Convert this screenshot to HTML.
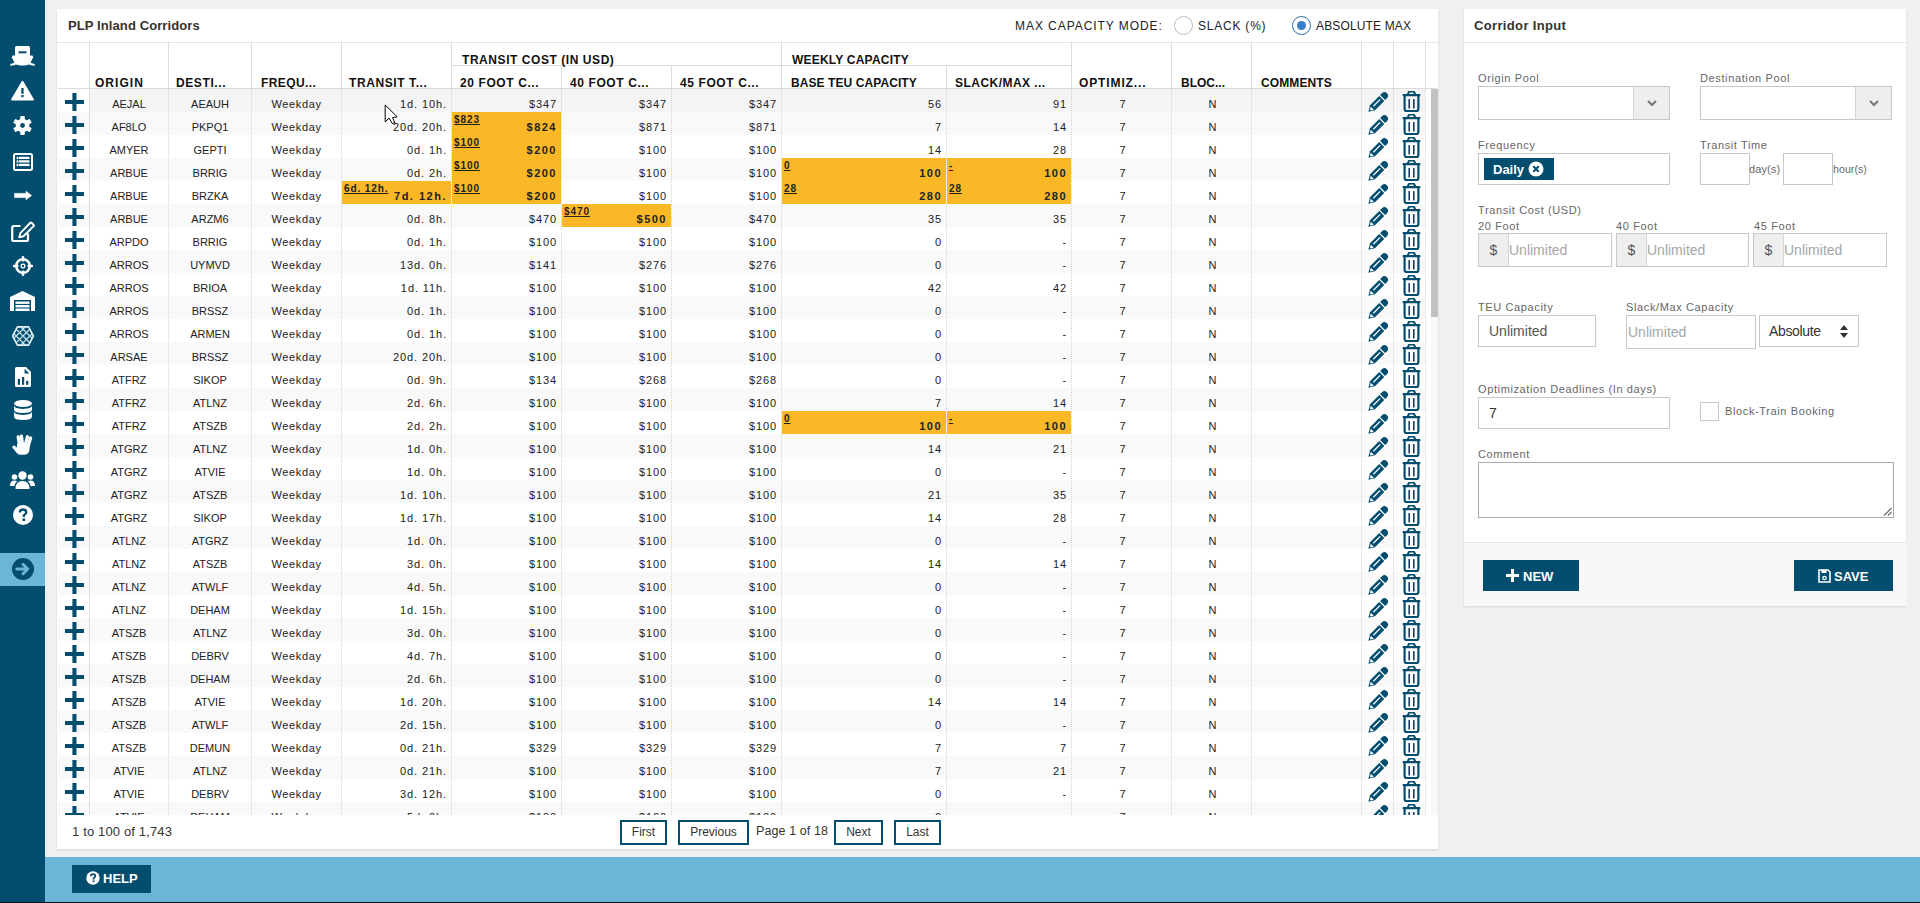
<!DOCTYPE html>
<html><head><meta charset="utf-8">
<style>
*{box-sizing:border-box;margin:0;padding:0}
html,body{width:1920px;height:903px;overflow:hidden}
body{background:#f0f0f0;font-family:"Liberation Sans",sans-serif;position:relative;color:#333}
.abs{position:absolute}
#sidebar{position:absolute;left:0;top:0;width:45px;height:903px;background:#034e6e}
#sidebar .hi{position:absolute;left:0;top:553px;width:45px;height:33px;background:#6bb6d7}
#sidebar svg{position:absolute}
#bottombar{position:absolute;left:45px;top:857px;width:1875px;height:46px;background:#6bb6d7}
#help{position:absolute;left:72px;top:865px;width:79px;height:28px;background:#034e6e;color:#fff;font-weight:bold;font-size:13px}
#panel{position:absolute;left:57px;top:9px;width:1381px;height:840px;background:#fff;box-shadow:0 1px 2px rgba(0,0,0,0.12)}
#title{position:absolute;left:11px;top:9px;font-size:13px;font-weight:bold;color:#333;letter-spacing:0.1px}
#hsep{position:absolute;left:0;top:33px;width:1381px;height:1px;background:#e6e6e6}
.mode{position:absolute;top:10px;font-size:12px;color:#222;white-space:nowrap}
.radio{position:absolute;top:7px;width:19px;height:19px;border-radius:50%;border:1px solid #bbb;background:#fff}
.radio.on{border-color:#2f6ea8}
.radio.on:after{content:"";position:absolute;left:4px;top:4px;width:9px;height:9px;border-radius:50%;background:#3a7dc9}
.hd{position:absolute;font-weight:bold;font-size:12px;color:#111;white-space:nowrap;letter-spacing:0.55px}
.vl{position:absolute;width:1px;background:#dcdcdc}
.hl-line{position:absolute;height:1px;background:#dcdcdc}
.row{position:absolute;left:1px;width:1367px;height:23px}
.c{position:absolute;top:0;height:23px;font-size:11px;color:#222;white-space:nowrap;line-height:31px;letter-spacing:0.45px}
.c.ctr{text-align:center}
.c.rt{text-align:right;padding-right:4px;letter-spacing:0.9px}
.c.cd{letter-spacing:0}
.c.one{letter-spacing:0;padding-left:2px}
.c.wk{letter-spacing:0.65px}
.c.or{background:#fbb826}
.c .sm{position:absolute;left:2px;top:2px;font-size:10px;font-weight:bold;text-decoration:underline;line-height:12px;letter-spacing:0.9px;color:#222}
.c .big{font-weight:bold;color:#222;letter-spacing:1.5px}
.dl{position:absolute;width:0;border-left:1px dotted #d3d3d3}
#foot-count{position:absolute;left:15px;top:815px;font-size:13px;color:#333;letter-spacing:0.15px}
.pbtn{position:absolute;top:811px;height:25px;border:2px solid #034e6e;background:#fff;font-size:12px;color:#333;text-align:center;line-height:21px}
#pagetxt{position:absolute;left:699px;top:815px;font-size:12.5px;color:#333;letter-spacing:0.1px}
#rpanel{position:absolute;left:1464px;top:9px;width:442px;height:597px;background:#fff;box-shadow:0 1px 2px rgba(0,0,0,0.12)}
#rtitle{position:absolute;left:10px;top:9px;font-size:13px;font-weight:bold;color:#333;letter-spacing:0.35px}
#rsep{position:absolute;left:0;top:33px;width:443px;height:1px;background:#e6e6e6}
.lbl{position:absolute;font-size:11px;color:#666;white-space:nowrap;letter-spacing:0.62px}
.inp{position:absolute;border:1px solid #c8c8c8;background:#fff}
.addon{position:absolute;left:0;top:0;bottom:0;width:30px;background:#eee;border-right:1px solid #d5d5d5;color:#555;font-size:14px;text-align:center}
.ph{position:absolute;font-size:14px;color:#a6a6a6;white-space:nowrap}
#rfoot{position:absolute;left:0;top:533px;width:443px;height:64px;background:#f8f8f8;border-top:1px solid #e6e6e6}
.btn{position:absolute;background:#034e6e;color:#fff;font-weight:bold;font-size:13px}
</style></head><body>

<div id="sidebar"><div class="hi"></div>
<svg style="left:10px;top:45px" width="25" height="22" viewBox="0 0 25 22"><g fill="#fff"><path d="M5 2.5 Q5 1 6.5 1 H18.5 Q20 1 20 2.5 V11.5 H5 Z"/><path d="M2.5 10.5 H22.5 L23.2 12.5 L20 18.5 Q18 20.5 12.5 20.5 Q7 20.5 5 18.5 L1.8 12.5 Z"/><path d="M0.3 19 Q3.5 18.8 5.5 16.5 L7 19 Q4.5 20.8 0.3 20.8 Z"/><path d="M24.7 19 Q21.5 18.8 19.5 16.5 L18 19 Q20.5 20.8 24.7 20.8 Z"/></g><rect x="8.5" y="6.3" width="8" height="2" fill="#034e6e"/></svg>
<svg style="left:11px;top:80px" width="23" height="21" viewBox="0 0 23 21"><path d="M11.5 2 L21.8 19.5 H1.2 Z" fill="#fff" stroke="#fff" stroke-linejoin="round" stroke-width="2.2"/><rect x="10.3" y="8" width="2.3" height="5.8" fill="#034e6e"/><rect x="10.3" y="15" width="2.3" height="2.2" fill="#034e6e"/></svg>
<svg style="left:13px;top:116px" width="19" height="19" viewBox="-9.5 -9.5 19 19"><g fill="#fff"><circle r="6.8"/><rect x="-2.3" y="-9.5" width="4.6" height="5" rx="1" transform="rotate(0)"/><rect x="-2.3" y="-9.5" width="4.6" height="5" rx="1" transform="rotate(60)"/><rect x="-2.3" y="-9.5" width="4.6" height="5" rx="1" transform="rotate(120)"/><rect x="-2.3" y="-9.5" width="4.6" height="5" rx="1" transform="rotate(180)"/><rect x="-2.3" y="-9.5" width="4.6" height="5" rx="1" transform="rotate(240)"/><rect x="-2.3" y="-9.5" width="4.6" height="5" rx="1" transform="rotate(300)"/></g><circle r="2.4" fill="#034e6e"/></svg>
<svg style="left:13px;top:153px" width="20" height="18" viewBox="0 0 20 18"><rect x="1" y="1" width="18" height="16" rx="1.5" fill="none" stroke="#fff" stroke-width="2"/><g fill="#fff"><rect x="3.6" y="3.8" width="1.8" height="2.3"/><rect x="6" y="3.8" width="10.5" height="2.3" rx="0.6"/><rect x="3.6" y="7.3" width="1.8" height="2.3"/><rect x="6" y="7.3" width="10.5" height="2.3" rx="0.6"/><rect x="3.6" y="10.8" width="1.8" height="2.3"/><rect x="6" y="10.8" width="10.5" height="2.3" rx="0.6"/></g></svg>
<svg style="left:14px;top:191px" width="18" height="9" viewBox="0 0 18 9"><path d="M0.5 2.4 H12 V0.3 L17.6 4.5 L12 8.7 V6.6 H0.5 Z" fill="#fff" stroke="#fff" stroke-width="0.6" stroke-linejoin="round"/></svg>
<svg style="left:10px;top:221px" width="25" height="22" viewBox="0 0 25 22"><path d="M10.5 5 H4 Q2.2 5 2.2 6.8 V18.2 Q2.2 20 4 20 H16.2 Q18 20 18 18.2 V12.5" fill="none" stroke="#fff" stroke-width="2.2"/><path d="M21.5 1.8 L23.6 3.9 Q24.2 4.5 23.6 5.1 L13.5 15.2 L9.3 16.3 L10.4 12.1 L20.3 1.8 Q20.9 1.2 21.5 1.8 Z" fill="none" stroke="#fff" stroke-width="2" stroke-linejoin="round"/></svg>
<svg style="left:13px;top:256px" width="20" height="20" viewBox="-10 -10 20 20"><circle r="6.8" fill="none" stroke="#fff" stroke-width="2.5"/><g fill="#fff"><rect x="-1.2" y="-10" width="2.4" height="5.5" rx="0.8"/><rect x="-1.2" y="4.5" width="2.4" height="5.5" rx="0.8"/><rect x="-10" y="-1.2" width="5.5" height="2.4" rx="0.8"/><rect x="4.5" y="-1.2" width="5.5" height="2.4" rx="0.8"/><rect x="-2.6" y="-0.6" width="1.4" height="1.2"/><rect x="1.2" y="-0.6" width="1.4" height="1.2"/><rect x="-0.6" y="-2.6" width="1.2" height="1.4"/><rect x="-0.6" y="1.2" width="1.2" height="1.4"/></g><rect x="-1.6" y="-1.6" width="3.2" height="3.2" fill="none" stroke="#fff" stroke-width="1"/></svg>
<svg style="left:10px;top:291px" width="25" height="20" viewBox="0 0 25 20"><path d="M0 6 L12.5 0 L25 6 V20 H21 V9 H4 V20 H0 Z" fill="#fff"/><g fill="#fff"><rect x="5.5" y="10.5" width="14" height="2.4"/><rect x="5.5" y="14" width="14" height="2.4"/><rect x="5.5" y="17.5" width="14" height="2.5"/></g></svg>
<svg style="left:12px;top:326px" width="22" height="20" viewBox="0 0 21 19"><defs><clipPath id="hx"><path d="M5.2 0.8h10.6l4.7 8.7-4.7 8.7H5.2L0.5 9.5z"/></clipPath></defs><g clip-path="url(#hx)"><path d="M-7.5 -2.0 L15.5 21.0 M-1.0 -2.0 L22.0 21.0 M5.5 -2.0 L28.5 21.0 M15.5 -2.0 L-7.5 21.0 M22.0 -2.0 L-1.0 21.0 M28.5 -2.0 L5.5 21.0" stroke="#c6dfea" stroke-width="1.2" fill="none"/></g><path d="M5.2 0.8h10.6l4.7 8.7-4.7 8.7H5.2L0.5 9.5z" fill="none" stroke="#e2f1f7" stroke-width="1.6" stroke-linejoin="round"/></svg>
<svg style="left:15px;top:367px" width="16" height="20" viewBox="0 0 16 20"><path d="M1.5 0 H11 L16 5 V18.5 Q16 20 14.5 20 H1.5 Q0 20 0 18.5 V1.5 Q0 0 1.5 0 Z" fill="#fff"/><path d="M9.6 1.8 L14.4 6.6 H9.6 Z" fill="#034e6e"/><g fill="#034e6e"><rect x="2.8" y="12" width="2.2" height="5.8"/><rect x="7" y="10" width="2.2" height="7.8"/><rect x="11.1" y="13.9" width="2.2" height="3.9"/></g></svg>
<svg style="left:14px;top:400px" width="18" height="20" viewBox="0 0 18 20"><g fill="#fff"><ellipse cx="9" cy="3.5" rx="9" ry="3.5"/><path d="M0 5.5q0 3 9 3.5q9-.5 9-3.5v4q0 3.5-9 3.5T0 9.5z"/><path d="M0 11.5q0 3 9 3.5q9-.5 9-3.5v5q0 3.5-9 3.5T0 16.5z"/></g></svg>
<svg style="left:12px;top:434px" width="22" height="22" viewBox="0 0 22 22"><g stroke="#fff" stroke-width="3.3" stroke-linecap="round" fill="none"><path d="M6.2 3 L7.6 11"/><path d="M9.4 2.2 L10.4 10"/><path d="M15.4 2.8 L13.6 10"/><path d="M18.6 4 L16.2 11.5"/><path d="M2 13.2 L5.5 16"/></g><path d="M5 9.5 H18.3 L17.2 17 Q16.2 20.8 12 20.8 H8.5 Q6 20.8 4.3 18.5 L1.8 15.2 L5 14.5 Z" fill="#fff"/></svg>
<svg style="left:10px;top:471px" width="25" height="18" viewBox="0 0 25 18"><g fill="#fff"><circle cx="12.5" cy="4.5" r="4.2"/><path d="M5.5 18 Q5.5 10 12.5 10 Q19.5 10 19.5 18z"/><circle cx="4.5" cy="6" r="2.8"/><circle cx="20.5" cy="6" r="2.8"/><path d="M0 15 Q0 9.5 4.5 9.5 Q6.5 9.5 7 10.5 Q4.5 12.5 4.5 15z"/><path d="M25 15 Q25 9.5 20.5 9.5 Q18.5 9.5 18 10.5 Q20.5 12.5 20.5 15z"/></g></svg>
<svg style="left:13px;top:505px" width="20" height="20" viewBox="0 0 20 20"><circle cx="10" cy="10" r="10" fill="#fff"/><path d="M6.8 7.5 Q7 4.5 10 4.5 Q13.2 4.5 13.2 7.3 Q13.2 9 11.2 10 Q10.8 10.4 10.8 12" fill="none" stroke="#034e6e" stroke-width="2.4"/><rect x="9.5" y="13.4" width="2.6" height="2.6" fill="#034e6e"/></svg>
<svg style="left:12px;top:558px" width="22" height="22" viewBox="0 0 22 22"><circle cx="11" cy="11" r="11" fill="#034e6e"/><path d="M4.8 11h10.4M11 6.3l4.7 4.7-4.7 4.7" stroke="#6bb6d7" stroke-width="3" fill="none" stroke-linecap="round" stroke-linejoin="round"/></svg>
</div>
<div id="panel">
<div id="title">PLP Inland Corridors</div><div id="hsep"></div>
<div class="mode" style="left:958px;letter-spacing:0.94px">MAX CAPACITY MODE:</div>
<div class="radio" style="left:1117px"></div>
<div class="mode" style="left:1141px;letter-spacing:0.78px">SLACK (%)</div>
<div class="radio on" style="left:1235px"></div>
<div class="mode" style="left:1259px;letter-spacing:0.15px">ABSOLUTE MAX</div>
<div class="hl-line" style="left:394px;top:56px;width:620px"></div>
<div class="hl-line" style="left:1px;top:79px;width:1379px"></div>
<div class="vl" style="left:32px;top:33px;height:46px"></div>
<div class="vl" style="left:111px;top:33px;height:46px"></div>
<div class="vl" style="left:194px;top:33px;height:46px"></div>
<div class="vl" style="left:284px;top:33px;height:46px"></div>
<div class="vl" style="left:394px;top:33px;height:46px"></div>
<div class="vl" style="left:504px;top:56px;height:23px"></div>
<div class="vl" style="left:614px;top:56px;height:23px"></div>
<div class="vl" style="left:724px;top:33px;height:46px"></div>
<div class="vl" style="left:889px;top:56px;height:23px"></div>
<div class="vl" style="left:1014px;top:33px;height:46px"></div>
<div class="vl" style="left:1114px;top:33px;height:46px"></div>
<div class="vl" style="left:1194px;top:33px;height:46px"></div>
<div class="vl" style="left:1304px;top:33px;height:46px"></div>
<div class="vl" style="left:1336px;top:33px;height:46px"></div>
<div class="vl" style="left:1368px;top:33px;height:46px"></div>
<div class="hd" style="left:38px;top:67px;letter-spacing:1.03px">ORIGIN</div>
<div class="hd" style="left:119px;top:67px;letter-spacing:0.60px">DESTI...</div>
<div class="hd" style="left:204px;top:67px;letter-spacing:0.40px">FREQU...</div>
<div class="hd" style="left:292px;top:67px;letter-spacing:0.59px">TRANSIT T...</div>
<div class="hd" style="left:403px;top:67px;letter-spacing:0.60px">20 FOOT C...</div>
<div class="hd" style="left:513px;top:67px;letter-spacing:0.60px">40 FOOT C...</div>
<div class="hd" style="left:623px;top:67px;letter-spacing:0.60px">45 FOOT C...</div>
<div class="hd" style="left:734px;top:67px;letter-spacing:0.08px">BASE TEU CAPACITY</div>
<div class="hd" style="left:898px;top:67px;letter-spacing:0.46px">SLACK/MAX ...</div>
<div class="hd" style="left:1022px;top:67px;letter-spacing:0.88px">OPTIMIZ...</div>
<div class="hd" style="left:1124px;top:67px;letter-spacing:0.00px">BLOC...</div>
<div class="hd" style="left:1204px;top:67px;letter-spacing:0.11px">COMMENTS</div>
<div class="hd" style="left:405px;top:44px;letter-spacing:0.56px">TRANSIT COST (IN USD)</div>
<div class="hd" style="left:735px;top:44px;letter-spacing:0.21px">WEEKLY CAPACITY</div>
<div class="abs" style="left:0;top:80px;width:1381px;height:726px;overflow:hidden">
<div class="abs" style="left:1px;top:0px;width:1367px;height:23px;background:#fff"></div>
<div class="abs" style="left:32px;top:0;width:1336px;height:23px;background:#f4f4f4"></div>
<div class="c ctr cd" style="left:33px;top:0px;width:78px">AEJAL</div>
<div class="c ctr cd" style="left:112px;top:0px;width:82px">AEAUH</div>
<div class="c ctr wk" style="left:195px;top:0px;width:89px">Weekday</div>
<div class="c rt" style="left:285px;top:0px;width:109px">1d. 10h.</div>
<div class="c rt" style="left:395px;top:0px;width:109px">$347</div>
<div class="c rt" style="left:505px;top:0px;width:109px">$347</div>
<div class="c rt" style="left:615px;top:0px;width:109px">$347</div>
<div class="c rt" style="left:725px;top:0px;width:164px">56</div>
<div class="c rt" style="left:890px;top:0px;width:124px">91</div>
<div class="c ctr one" style="left:1015px;top:0px;width:99px">7</div>
<div class="c ctr one" style="left:1115px;top:0px;width:79px">N</div>
<div class="c ctr" style="left:1195px;top:0px;width:109px"></div>
<div class="abs" style="left:8px;top:4px;line-height:0"><svg width="19" height="18" viewBox="0 0 19 18"><path d="M7.4 0h4.1v7h7.5v3.9h-7.5V18H7.4v-7.1H0V7h7.4z" fill="#034e6e"/></svg></div>
<div class="abs" style="left:1311px;top:3px;line-height:0"><svg width="21" height="21" viewBox="0 0 21 21" style="overflow:visible"><g transform="translate(0.6,19.6) rotate(-45)"><path d="M0 0 L5.5 -3.5 H18.6 V3.5 H5.5 Z" fill="#034e6e"/><path d="M19.8 -3.5 H22.4 A3.5 3.5 0 0 1 22.4 3.5 H19.8 Z" fill="#034e6e"/><rect x="7.2" y="-1.1" width="9.6" height="1.3" fill="#fff"/><path d="M1.7 0.2 L5 -2 V2.4 Z" fill="#fff"/><path d="M0 0 L2 -1.2 V1.2 Z" fill="#034e6e"/></g></svg></div>
<div class="abs" style="left:1345px;top:2px;line-height:0"><svg width="19" height="21" viewBox="0 0 19 21"><path d="M5.8 3.2 L6.8 1.2 Q7.2 0.6 8 0.6 H11 Q11.8 0.6 12.2 1.2 L13.2 3.2" stroke="#034e6e" stroke-width="2" fill="none" stroke-linejoin="round"/><rect x="0.6" y="3" width="17.8" height="2.3" rx="0.8" fill="#034e6e"/><path d="M2.6 4.5 V17.8 Q2.6 20.1 4.6 20.1 H14.4 Q16.4 20.1 16.4 17.8 V4.5" stroke="#034e6e" stroke-width="2.2" fill="none"/><rect x="6.4" y="8" width="1.6" height="9.5" rx="0.5" fill="#1d3b5e"/><rect x="11" y="8" width="1.6" height="9.5" rx="0.5" fill="#1d3b5e"/></svg></div>
<div class="abs" style="left:1px;top:23px;width:1367px;height:23px;background:#f9f9f9"></div>
<div class="c ctr cd" style="left:33px;top:23px;width:78px">AF8LO</div>
<div class="c ctr cd" style="left:112px;top:23px;width:82px">PKPQ1</div>
<div class="c ctr wk" style="left:195px;top:23px;width:89px">Weekday</div>
<div class="c rt" style="left:285px;top:23px;width:109px">20d. 20h.</div>
<div class="c rt or" style="left:395px;top:23px;width:109px"><span class="sm">$823</span><span class="big">$824</span></div>
<div class="c rt" style="left:505px;top:23px;width:109px">$871</div>
<div class="c rt" style="left:615px;top:23px;width:109px">$871</div>
<div class="c rt" style="left:725px;top:23px;width:164px">7</div>
<div class="c rt" style="left:890px;top:23px;width:124px">14</div>
<div class="c ctr one" style="left:1015px;top:23px;width:99px">7</div>
<div class="c ctr one" style="left:1115px;top:23px;width:79px">N</div>
<div class="c ctr" style="left:1195px;top:23px;width:109px"></div>
<div class="abs" style="left:8px;top:27px;line-height:0"><svg width="19" height="18" viewBox="0 0 19 18"><path d="M7.4 0h4.1v7h7.5v3.9h-7.5V18H7.4v-7.1H0V7h7.4z" fill="#034e6e"/></svg></div>
<div class="abs" style="left:1311px;top:26px;line-height:0"><svg width="21" height="21" viewBox="0 0 21 21" style="overflow:visible"><g transform="translate(0.6,19.6) rotate(-45)"><path d="M0 0 L5.5 -3.5 H18.6 V3.5 H5.5 Z" fill="#034e6e"/><path d="M19.8 -3.5 H22.4 A3.5 3.5 0 0 1 22.4 3.5 H19.8 Z" fill="#034e6e"/><rect x="7.2" y="-1.1" width="9.6" height="1.3" fill="#fff"/><path d="M1.7 0.2 L5 -2 V2.4 Z" fill="#fff"/><path d="M0 0 L2 -1.2 V1.2 Z" fill="#034e6e"/></g></svg></div>
<div class="abs" style="left:1345px;top:25px;line-height:0"><svg width="19" height="21" viewBox="0 0 19 21"><path d="M5.8 3.2 L6.8 1.2 Q7.2 0.6 8 0.6 H11 Q11.8 0.6 12.2 1.2 L13.2 3.2" stroke="#034e6e" stroke-width="2" fill="none" stroke-linejoin="round"/><rect x="0.6" y="3" width="17.8" height="2.3" rx="0.8" fill="#034e6e"/><path d="M2.6 4.5 V17.8 Q2.6 20.1 4.6 20.1 H14.4 Q16.4 20.1 16.4 17.8 V4.5" stroke="#034e6e" stroke-width="2.2" fill="none"/><rect x="6.4" y="8" width="1.6" height="9.5" rx="0.5" fill="#1d3b5e"/><rect x="11" y="8" width="1.6" height="9.5" rx="0.5" fill="#1d3b5e"/></svg></div>
<div class="abs" style="left:1px;top:46px;width:1367px;height:23px;background:#fff"></div>
<div class="c ctr cd" style="left:33px;top:46px;width:78px">AMYER</div>
<div class="c ctr cd" style="left:112px;top:46px;width:82px">GEPTI</div>
<div class="c ctr wk" style="left:195px;top:46px;width:89px">Weekday</div>
<div class="c rt" style="left:285px;top:46px;width:109px">0d. 1h.</div>
<div class="c rt or" style="left:395px;top:46px;width:109px"><span class="sm">$100</span><span class="big">$200</span></div>
<div class="c rt" style="left:505px;top:46px;width:109px">$100</div>
<div class="c rt" style="left:615px;top:46px;width:109px">$100</div>
<div class="c rt" style="left:725px;top:46px;width:164px">14</div>
<div class="c rt" style="left:890px;top:46px;width:124px">28</div>
<div class="c ctr one" style="left:1015px;top:46px;width:99px">7</div>
<div class="c ctr one" style="left:1115px;top:46px;width:79px">N</div>
<div class="c ctr" style="left:1195px;top:46px;width:109px"></div>
<div class="abs" style="left:8px;top:50px;line-height:0"><svg width="19" height="18" viewBox="0 0 19 18"><path d="M7.4 0h4.1v7h7.5v3.9h-7.5V18H7.4v-7.1H0V7h7.4z" fill="#034e6e"/></svg></div>
<div class="abs" style="left:1311px;top:49px;line-height:0"><svg width="21" height="21" viewBox="0 0 21 21" style="overflow:visible"><g transform="translate(0.6,19.6) rotate(-45)"><path d="M0 0 L5.5 -3.5 H18.6 V3.5 H5.5 Z" fill="#034e6e"/><path d="M19.8 -3.5 H22.4 A3.5 3.5 0 0 1 22.4 3.5 H19.8 Z" fill="#034e6e"/><rect x="7.2" y="-1.1" width="9.6" height="1.3" fill="#fff"/><path d="M1.7 0.2 L5 -2 V2.4 Z" fill="#fff"/><path d="M0 0 L2 -1.2 V1.2 Z" fill="#034e6e"/></g></svg></div>
<div class="abs" style="left:1345px;top:48px;line-height:0"><svg width="19" height="21" viewBox="0 0 19 21"><path d="M5.8 3.2 L6.8 1.2 Q7.2 0.6 8 0.6 H11 Q11.8 0.6 12.2 1.2 L13.2 3.2" stroke="#034e6e" stroke-width="2" fill="none" stroke-linejoin="round"/><rect x="0.6" y="3" width="17.8" height="2.3" rx="0.8" fill="#034e6e"/><path d="M2.6 4.5 V17.8 Q2.6 20.1 4.6 20.1 H14.4 Q16.4 20.1 16.4 17.8 V4.5" stroke="#034e6e" stroke-width="2.2" fill="none"/><rect x="6.4" y="8" width="1.6" height="9.5" rx="0.5" fill="#1d3b5e"/><rect x="11" y="8" width="1.6" height="9.5" rx="0.5" fill="#1d3b5e"/></svg></div>
<div class="abs" style="left:1px;top:69px;width:1367px;height:23px;background:#f9f9f9"></div>
<div class="c ctr cd" style="left:33px;top:69px;width:78px">ARBUE</div>
<div class="c ctr cd" style="left:112px;top:69px;width:82px">BRRIG</div>
<div class="c ctr wk" style="left:195px;top:69px;width:89px">Weekday</div>
<div class="c rt" style="left:285px;top:69px;width:109px">0d. 2h.</div>
<div class="c rt or" style="left:395px;top:69px;width:109px"><span class="sm">$100</span><span class="big">$200</span></div>
<div class="c rt" style="left:505px;top:69px;width:109px">$100</div>
<div class="c rt" style="left:615px;top:69px;width:109px">$100</div>
<div class="c rt or" style="left:725px;top:69px;width:164px"><span class="sm">0</span><span class="big">100</span></div>
<div class="c rt or" style="left:890px;top:69px;width:124px"><span class="sm">-</span><span class="big">100</span></div>
<div class="c ctr one" style="left:1015px;top:69px;width:99px">7</div>
<div class="c ctr one" style="left:1115px;top:69px;width:79px">N</div>
<div class="c ctr" style="left:1195px;top:69px;width:109px"></div>
<div class="abs" style="left:8px;top:73px;line-height:0"><svg width="19" height="18" viewBox="0 0 19 18"><path d="M7.4 0h4.1v7h7.5v3.9h-7.5V18H7.4v-7.1H0V7h7.4z" fill="#034e6e"/></svg></div>
<div class="abs" style="left:1311px;top:72px;line-height:0"><svg width="21" height="21" viewBox="0 0 21 21" style="overflow:visible"><g transform="translate(0.6,19.6) rotate(-45)"><path d="M0 0 L5.5 -3.5 H18.6 V3.5 H5.5 Z" fill="#034e6e"/><path d="M19.8 -3.5 H22.4 A3.5 3.5 0 0 1 22.4 3.5 H19.8 Z" fill="#034e6e"/><rect x="7.2" y="-1.1" width="9.6" height="1.3" fill="#fff"/><path d="M1.7 0.2 L5 -2 V2.4 Z" fill="#fff"/><path d="M0 0 L2 -1.2 V1.2 Z" fill="#034e6e"/></g></svg></div>
<div class="abs" style="left:1345px;top:71px;line-height:0"><svg width="19" height="21" viewBox="0 0 19 21"><path d="M5.8 3.2 L6.8 1.2 Q7.2 0.6 8 0.6 H11 Q11.8 0.6 12.2 1.2 L13.2 3.2" stroke="#034e6e" stroke-width="2" fill="none" stroke-linejoin="round"/><rect x="0.6" y="3" width="17.8" height="2.3" rx="0.8" fill="#034e6e"/><path d="M2.6 4.5 V17.8 Q2.6 20.1 4.6 20.1 H14.4 Q16.4 20.1 16.4 17.8 V4.5" stroke="#034e6e" stroke-width="2.2" fill="none"/><rect x="6.4" y="8" width="1.6" height="9.5" rx="0.5" fill="#1d3b5e"/><rect x="11" y="8" width="1.6" height="9.5" rx="0.5" fill="#1d3b5e"/></svg></div>
<div class="abs" style="left:1px;top:92px;width:1367px;height:23px;background:#fff"></div>
<div class="c ctr cd" style="left:33px;top:92px;width:78px">ARBUE</div>
<div class="c ctr cd" style="left:112px;top:92px;width:82px">BRZKA</div>
<div class="c ctr wk" style="left:195px;top:92px;width:89px">Weekday</div>
<div class="c rt or" style="left:285px;top:92px;width:109px"><span class="sm">6d. 12h.</span><span class="big">7d. 12h.</span></div>
<div class="c rt or" style="left:395px;top:92px;width:109px"><span class="sm">$100</span><span class="big">$200</span></div>
<div class="c rt" style="left:505px;top:92px;width:109px">$100</div>
<div class="c rt" style="left:615px;top:92px;width:109px">$100</div>
<div class="c rt or" style="left:725px;top:92px;width:164px"><span class="sm">28</span><span class="big">280</span></div>
<div class="c rt or" style="left:890px;top:92px;width:124px"><span class="sm">28</span><span class="big">280</span></div>
<div class="c ctr one" style="left:1015px;top:92px;width:99px">7</div>
<div class="c ctr one" style="left:1115px;top:92px;width:79px">N</div>
<div class="c ctr" style="left:1195px;top:92px;width:109px"></div>
<div class="abs" style="left:8px;top:96px;line-height:0"><svg width="19" height="18" viewBox="0 0 19 18"><path d="M7.4 0h4.1v7h7.5v3.9h-7.5V18H7.4v-7.1H0V7h7.4z" fill="#034e6e"/></svg></div>
<div class="abs" style="left:1311px;top:95px;line-height:0"><svg width="21" height="21" viewBox="0 0 21 21" style="overflow:visible"><g transform="translate(0.6,19.6) rotate(-45)"><path d="M0 0 L5.5 -3.5 H18.6 V3.5 H5.5 Z" fill="#034e6e"/><path d="M19.8 -3.5 H22.4 A3.5 3.5 0 0 1 22.4 3.5 H19.8 Z" fill="#034e6e"/><rect x="7.2" y="-1.1" width="9.6" height="1.3" fill="#fff"/><path d="M1.7 0.2 L5 -2 V2.4 Z" fill="#fff"/><path d="M0 0 L2 -1.2 V1.2 Z" fill="#034e6e"/></g></svg></div>
<div class="abs" style="left:1345px;top:94px;line-height:0"><svg width="19" height="21" viewBox="0 0 19 21"><path d="M5.8 3.2 L6.8 1.2 Q7.2 0.6 8 0.6 H11 Q11.8 0.6 12.2 1.2 L13.2 3.2" stroke="#034e6e" stroke-width="2" fill="none" stroke-linejoin="round"/><rect x="0.6" y="3" width="17.8" height="2.3" rx="0.8" fill="#034e6e"/><path d="M2.6 4.5 V17.8 Q2.6 20.1 4.6 20.1 H14.4 Q16.4 20.1 16.4 17.8 V4.5" stroke="#034e6e" stroke-width="2.2" fill="none"/><rect x="6.4" y="8" width="1.6" height="9.5" rx="0.5" fill="#1d3b5e"/><rect x="11" y="8" width="1.6" height="9.5" rx="0.5" fill="#1d3b5e"/></svg></div>
<div class="abs" style="left:1px;top:115px;width:1367px;height:23px;background:#f9f9f9"></div>
<div class="c ctr cd" style="left:33px;top:115px;width:78px">ARBUE</div>
<div class="c ctr cd" style="left:112px;top:115px;width:82px">ARZM6</div>
<div class="c ctr wk" style="left:195px;top:115px;width:89px">Weekday</div>
<div class="c rt" style="left:285px;top:115px;width:109px">0d. 8h.</div>
<div class="c rt" style="left:395px;top:115px;width:109px">$470</div>
<div class="c rt or" style="left:505px;top:115px;width:109px"><span class="sm">$470</span><span class="big">$500</span></div>
<div class="c rt" style="left:615px;top:115px;width:109px">$470</div>
<div class="c rt" style="left:725px;top:115px;width:164px">35</div>
<div class="c rt" style="left:890px;top:115px;width:124px">35</div>
<div class="c ctr one" style="left:1015px;top:115px;width:99px">7</div>
<div class="c ctr one" style="left:1115px;top:115px;width:79px">N</div>
<div class="c ctr" style="left:1195px;top:115px;width:109px"></div>
<div class="abs" style="left:8px;top:119px;line-height:0"><svg width="19" height="18" viewBox="0 0 19 18"><path d="M7.4 0h4.1v7h7.5v3.9h-7.5V18H7.4v-7.1H0V7h7.4z" fill="#034e6e"/></svg></div>
<div class="abs" style="left:1311px;top:118px;line-height:0"><svg width="21" height="21" viewBox="0 0 21 21" style="overflow:visible"><g transform="translate(0.6,19.6) rotate(-45)"><path d="M0 0 L5.5 -3.5 H18.6 V3.5 H5.5 Z" fill="#034e6e"/><path d="M19.8 -3.5 H22.4 A3.5 3.5 0 0 1 22.4 3.5 H19.8 Z" fill="#034e6e"/><rect x="7.2" y="-1.1" width="9.6" height="1.3" fill="#fff"/><path d="M1.7 0.2 L5 -2 V2.4 Z" fill="#fff"/><path d="M0 0 L2 -1.2 V1.2 Z" fill="#034e6e"/></g></svg></div>
<div class="abs" style="left:1345px;top:117px;line-height:0"><svg width="19" height="21" viewBox="0 0 19 21"><path d="M5.8 3.2 L6.8 1.2 Q7.2 0.6 8 0.6 H11 Q11.8 0.6 12.2 1.2 L13.2 3.2" stroke="#034e6e" stroke-width="2" fill="none" stroke-linejoin="round"/><rect x="0.6" y="3" width="17.8" height="2.3" rx="0.8" fill="#034e6e"/><path d="M2.6 4.5 V17.8 Q2.6 20.1 4.6 20.1 H14.4 Q16.4 20.1 16.4 17.8 V4.5" stroke="#034e6e" stroke-width="2.2" fill="none"/><rect x="6.4" y="8" width="1.6" height="9.5" rx="0.5" fill="#1d3b5e"/><rect x="11" y="8" width="1.6" height="9.5" rx="0.5" fill="#1d3b5e"/></svg></div>
<div class="abs" style="left:1px;top:138px;width:1367px;height:23px;background:#fff"></div>
<div class="c ctr cd" style="left:33px;top:138px;width:78px">ARPDO</div>
<div class="c ctr cd" style="left:112px;top:138px;width:82px">BRRIG</div>
<div class="c ctr wk" style="left:195px;top:138px;width:89px">Weekday</div>
<div class="c rt" style="left:285px;top:138px;width:109px">0d. 1h.</div>
<div class="c rt" style="left:395px;top:138px;width:109px">$100</div>
<div class="c rt" style="left:505px;top:138px;width:109px">$100</div>
<div class="c rt" style="left:615px;top:138px;width:109px">$100</div>
<div class="c rt" style="left:725px;top:138px;width:164px">0</div>
<div class="c rt" style="left:890px;top:138px;width:124px">-</div>
<div class="c ctr one" style="left:1015px;top:138px;width:99px">7</div>
<div class="c ctr one" style="left:1115px;top:138px;width:79px">N</div>
<div class="c ctr" style="left:1195px;top:138px;width:109px"></div>
<div class="abs" style="left:8px;top:142px;line-height:0"><svg width="19" height="18" viewBox="0 0 19 18"><path d="M7.4 0h4.1v7h7.5v3.9h-7.5V18H7.4v-7.1H0V7h7.4z" fill="#034e6e"/></svg></div>
<div class="abs" style="left:1311px;top:141px;line-height:0"><svg width="21" height="21" viewBox="0 0 21 21" style="overflow:visible"><g transform="translate(0.6,19.6) rotate(-45)"><path d="M0 0 L5.5 -3.5 H18.6 V3.5 H5.5 Z" fill="#034e6e"/><path d="M19.8 -3.5 H22.4 A3.5 3.5 0 0 1 22.4 3.5 H19.8 Z" fill="#034e6e"/><rect x="7.2" y="-1.1" width="9.6" height="1.3" fill="#fff"/><path d="M1.7 0.2 L5 -2 V2.4 Z" fill="#fff"/><path d="M0 0 L2 -1.2 V1.2 Z" fill="#034e6e"/></g></svg></div>
<div class="abs" style="left:1345px;top:140px;line-height:0"><svg width="19" height="21" viewBox="0 0 19 21"><path d="M5.8 3.2 L6.8 1.2 Q7.2 0.6 8 0.6 H11 Q11.8 0.6 12.2 1.2 L13.2 3.2" stroke="#034e6e" stroke-width="2" fill="none" stroke-linejoin="round"/><rect x="0.6" y="3" width="17.8" height="2.3" rx="0.8" fill="#034e6e"/><path d="M2.6 4.5 V17.8 Q2.6 20.1 4.6 20.1 H14.4 Q16.4 20.1 16.4 17.8 V4.5" stroke="#034e6e" stroke-width="2.2" fill="none"/><rect x="6.4" y="8" width="1.6" height="9.5" rx="0.5" fill="#1d3b5e"/><rect x="11" y="8" width="1.6" height="9.5" rx="0.5" fill="#1d3b5e"/></svg></div>
<div class="abs" style="left:1px;top:161px;width:1367px;height:23px;background:#f9f9f9"></div>
<div class="c ctr cd" style="left:33px;top:161px;width:78px">ARROS</div>
<div class="c ctr cd" style="left:112px;top:161px;width:82px">UYMVD</div>
<div class="c ctr wk" style="left:195px;top:161px;width:89px">Weekday</div>
<div class="c rt" style="left:285px;top:161px;width:109px">13d. 0h.</div>
<div class="c rt" style="left:395px;top:161px;width:109px">$141</div>
<div class="c rt" style="left:505px;top:161px;width:109px">$276</div>
<div class="c rt" style="left:615px;top:161px;width:109px">$276</div>
<div class="c rt" style="left:725px;top:161px;width:164px">0</div>
<div class="c rt" style="left:890px;top:161px;width:124px">-</div>
<div class="c ctr one" style="left:1015px;top:161px;width:99px">7</div>
<div class="c ctr one" style="left:1115px;top:161px;width:79px">N</div>
<div class="c ctr" style="left:1195px;top:161px;width:109px"></div>
<div class="abs" style="left:8px;top:165px;line-height:0"><svg width="19" height="18" viewBox="0 0 19 18"><path d="M7.4 0h4.1v7h7.5v3.9h-7.5V18H7.4v-7.1H0V7h7.4z" fill="#034e6e"/></svg></div>
<div class="abs" style="left:1311px;top:164px;line-height:0"><svg width="21" height="21" viewBox="0 0 21 21" style="overflow:visible"><g transform="translate(0.6,19.6) rotate(-45)"><path d="M0 0 L5.5 -3.5 H18.6 V3.5 H5.5 Z" fill="#034e6e"/><path d="M19.8 -3.5 H22.4 A3.5 3.5 0 0 1 22.4 3.5 H19.8 Z" fill="#034e6e"/><rect x="7.2" y="-1.1" width="9.6" height="1.3" fill="#fff"/><path d="M1.7 0.2 L5 -2 V2.4 Z" fill="#fff"/><path d="M0 0 L2 -1.2 V1.2 Z" fill="#034e6e"/></g></svg></div>
<div class="abs" style="left:1345px;top:163px;line-height:0"><svg width="19" height="21" viewBox="0 0 19 21"><path d="M5.8 3.2 L6.8 1.2 Q7.2 0.6 8 0.6 H11 Q11.8 0.6 12.2 1.2 L13.2 3.2" stroke="#034e6e" stroke-width="2" fill="none" stroke-linejoin="round"/><rect x="0.6" y="3" width="17.8" height="2.3" rx="0.8" fill="#034e6e"/><path d="M2.6 4.5 V17.8 Q2.6 20.1 4.6 20.1 H14.4 Q16.4 20.1 16.4 17.8 V4.5" stroke="#034e6e" stroke-width="2.2" fill="none"/><rect x="6.4" y="8" width="1.6" height="9.5" rx="0.5" fill="#1d3b5e"/><rect x="11" y="8" width="1.6" height="9.5" rx="0.5" fill="#1d3b5e"/></svg></div>
<div class="abs" style="left:1px;top:184px;width:1367px;height:23px;background:#fff"></div>
<div class="c ctr cd" style="left:33px;top:184px;width:78px">ARROS</div>
<div class="c ctr cd" style="left:112px;top:184px;width:82px">BRIOA</div>
<div class="c ctr wk" style="left:195px;top:184px;width:89px">Weekday</div>
<div class="c rt" style="left:285px;top:184px;width:109px">1d. 11h.</div>
<div class="c rt" style="left:395px;top:184px;width:109px">$100</div>
<div class="c rt" style="left:505px;top:184px;width:109px">$100</div>
<div class="c rt" style="left:615px;top:184px;width:109px">$100</div>
<div class="c rt" style="left:725px;top:184px;width:164px">42</div>
<div class="c rt" style="left:890px;top:184px;width:124px">42</div>
<div class="c ctr one" style="left:1015px;top:184px;width:99px">7</div>
<div class="c ctr one" style="left:1115px;top:184px;width:79px">N</div>
<div class="c ctr" style="left:1195px;top:184px;width:109px"></div>
<div class="abs" style="left:8px;top:188px;line-height:0"><svg width="19" height="18" viewBox="0 0 19 18"><path d="M7.4 0h4.1v7h7.5v3.9h-7.5V18H7.4v-7.1H0V7h7.4z" fill="#034e6e"/></svg></div>
<div class="abs" style="left:1311px;top:187px;line-height:0"><svg width="21" height="21" viewBox="0 0 21 21" style="overflow:visible"><g transform="translate(0.6,19.6) rotate(-45)"><path d="M0 0 L5.5 -3.5 H18.6 V3.5 H5.5 Z" fill="#034e6e"/><path d="M19.8 -3.5 H22.4 A3.5 3.5 0 0 1 22.4 3.5 H19.8 Z" fill="#034e6e"/><rect x="7.2" y="-1.1" width="9.6" height="1.3" fill="#fff"/><path d="M1.7 0.2 L5 -2 V2.4 Z" fill="#fff"/><path d="M0 0 L2 -1.2 V1.2 Z" fill="#034e6e"/></g></svg></div>
<div class="abs" style="left:1345px;top:186px;line-height:0"><svg width="19" height="21" viewBox="0 0 19 21"><path d="M5.8 3.2 L6.8 1.2 Q7.2 0.6 8 0.6 H11 Q11.8 0.6 12.2 1.2 L13.2 3.2" stroke="#034e6e" stroke-width="2" fill="none" stroke-linejoin="round"/><rect x="0.6" y="3" width="17.8" height="2.3" rx="0.8" fill="#034e6e"/><path d="M2.6 4.5 V17.8 Q2.6 20.1 4.6 20.1 H14.4 Q16.4 20.1 16.4 17.8 V4.5" stroke="#034e6e" stroke-width="2.2" fill="none"/><rect x="6.4" y="8" width="1.6" height="9.5" rx="0.5" fill="#1d3b5e"/><rect x="11" y="8" width="1.6" height="9.5" rx="0.5" fill="#1d3b5e"/></svg></div>
<div class="abs" style="left:1px;top:207px;width:1367px;height:23px;background:#f9f9f9"></div>
<div class="c ctr cd" style="left:33px;top:207px;width:78px">ARROS</div>
<div class="c ctr cd" style="left:112px;top:207px;width:82px">BRSSZ</div>
<div class="c ctr wk" style="left:195px;top:207px;width:89px">Weekday</div>
<div class="c rt" style="left:285px;top:207px;width:109px">0d. 1h.</div>
<div class="c rt" style="left:395px;top:207px;width:109px">$100</div>
<div class="c rt" style="left:505px;top:207px;width:109px">$100</div>
<div class="c rt" style="left:615px;top:207px;width:109px">$100</div>
<div class="c rt" style="left:725px;top:207px;width:164px">0</div>
<div class="c rt" style="left:890px;top:207px;width:124px">-</div>
<div class="c ctr one" style="left:1015px;top:207px;width:99px">7</div>
<div class="c ctr one" style="left:1115px;top:207px;width:79px">N</div>
<div class="c ctr" style="left:1195px;top:207px;width:109px"></div>
<div class="abs" style="left:8px;top:211px;line-height:0"><svg width="19" height="18" viewBox="0 0 19 18"><path d="M7.4 0h4.1v7h7.5v3.9h-7.5V18H7.4v-7.1H0V7h7.4z" fill="#034e6e"/></svg></div>
<div class="abs" style="left:1311px;top:210px;line-height:0"><svg width="21" height="21" viewBox="0 0 21 21" style="overflow:visible"><g transform="translate(0.6,19.6) rotate(-45)"><path d="M0 0 L5.5 -3.5 H18.6 V3.5 H5.5 Z" fill="#034e6e"/><path d="M19.8 -3.5 H22.4 A3.5 3.5 0 0 1 22.4 3.5 H19.8 Z" fill="#034e6e"/><rect x="7.2" y="-1.1" width="9.6" height="1.3" fill="#fff"/><path d="M1.7 0.2 L5 -2 V2.4 Z" fill="#fff"/><path d="M0 0 L2 -1.2 V1.2 Z" fill="#034e6e"/></g></svg></div>
<div class="abs" style="left:1345px;top:209px;line-height:0"><svg width="19" height="21" viewBox="0 0 19 21"><path d="M5.8 3.2 L6.8 1.2 Q7.2 0.6 8 0.6 H11 Q11.8 0.6 12.2 1.2 L13.2 3.2" stroke="#034e6e" stroke-width="2" fill="none" stroke-linejoin="round"/><rect x="0.6" y="3" width="17.8" height="2.3" rx="0.8" fill="#034e6e"/><path d="M2.6 4.5 V17.8 Q2.6 20.1 4.6 20.1 H14.4 Q16.4 20.1 16.4 17.8 V4.5" stroke="#034e6e" stroke-width="2.2" fill="none"/><rect x="6.4" y="8" width="1.6" height="9.5" rx="0.5" fill="#1d3b5e"/><rect x="11" y="8" width="1.6" height="9.5" rx="0.5" fill="#1d3b5e"/></svg></div>
<div class="abs" style="left:1px;top:230px;width:1367px;height:23px;background:#fff"></div>
<div class="c ctr cd" style="left:33px;top:230px;width:78px">ARROS</div>
<div class="c ctr cd" style="left:112px;top:230px;width:82px">ARMEN</div>
<div class="c ctr wk" style="left:195px;top:230px;width:89px">Weekday</div>
<div class="c rt" style="left:285px;top:230px;width:109px">0d. 1h.</div>
<div class="c rt" style="left:395px;top:230px;width:109px">$100</div>
<div class="c rt" style="left:505px;top:230px;width:109px">$100</div>
<div class="c rt" style="left:615px;top:230px;width:109px">$100</div>
<div class="c rt" style="left:725px;top:230px;width:164px">0</div>
<div class="c rt" style="left:890px;top:230px;width:124px">-</div>
<div class="c ctr one" style="left:1015px;top:230px;width:99px">7</div>
<div class="c ctr one" style="left:1115px;top:230px;width:79px">N</div>
<div class="c ctr" style="left:1195px;top:230px;width:109px"></div>
<div class="abs" style="left:8px;top:234px;line-height:0"><svg width="19" height="18" viewBox="0 0 19 18"><path d="M7.4 0h4.1v7h7.5v3.9h-7.5V18H7.4v-7.1H0V7h7.4z" fill="#034e6e"/></svg></div>
<div class="abs" style="left:1311px;top:233px;line-height:0"><svg width="21" height="21" viewBox="0 0 21 21" style="overflow:visible"><g transform="translate(0.6,19.6) rotate(-45)"><path d="M0 0 L5.5 -3.5 H18.6 V3.5 H5.5 Z" fill="#034e6e"/><path d="M19.8 -3.5 H22.4 A3.5 3.5 0 0 1 22.4 3.5 H19.8 Z" fill="#034e6e"/><rect x="7.2" y="-1.1" width="9.6" height="1.3" fill="#fff"/><path d="M1.7 0.2 L5 -2 V2.4 Z" fill="#fff"/><path d="M0 0 L2 -1.2 V1.2 Z" fill="#034e6e"/></g></svg></div>
<div class="abs" style="left:1345px;top:232px;line-height:0"><svg width="19" height="21" viewBox="0 0 19 21"><path d="M5.8 3.2 L6.8 1.2 Q7.2 0.6 8 0.6 H11 Q11.8 0.6 12.2 1.2 L13.2 3.2" stroke="#034e6e" stroke-width="2" fill="none" stroke-linejoin="round"/><rect x="0.6" y="3" width="17.8" height="2.3" rx="0.8" fill="#034e6e"/><path d="M2.6 4.5 V17.8 Q2.6 20.1 4.6 20.1 H14.4 Q16.4 20.1 16.4 17.8 V4.5" stroke="#034e6e" stroke-width="2.2" fill="none"/><rect x="6.4" y="8" width="1.6" height="9.5" rx="0.5" fill="#1d3b5e"/><rect x="11" y="8" width="1.6" height="9.5" rx="0.5" fill="#1d3b5e"/></svg></div>
<div class="abs" style="left:1px;top:253px;width:1367px;height:23px;background:#f9f9f9"></div>
<div class="c ctr cd" style="left:33px;top:253px;width:78px">ARSAE</div>
<div class="c ctr cd" style="left:112px;top:253px;width:82px">BRSSZ</div>
<div class="c ctr wk" style="left:195px;top:253px;width:89px">Weekday</div>
<div class="c rt" style="left:285px;top:253px;width:109px">20d. 20h.</div>
<div class="c rt" style="left:395px;top:253px;width:109px">$100</div>
<div class="c rt" style="left:505px;top:253px;width:109px">$100</div>
<div class="c rt" style="left:615px;top:253px;width:109px">$100</div>
<div class="c rt" style="left:725px;top:253px;width:164px">0</div>
<div class="c rt" style="left:890px;top:253px;width:124px">-</div>
<div class="c ctr one" style="left:1015px;top:253px;width:99px">7</div>
<div class="c ctr one" style="left:1115px;top:253px;width:79px">N</div>
<div class="c ctr" style="left:1195px;top:253px;width:109px"></div>
<div class="abs" style="left:8px;top:257px;line-height:0"><svg width="19" height="18" viewBox="0 0 19 18"><path d="M7.4 0h4.1v7h7.5v3.9h-7.5V18H7.4v-7.1H0V7h7.4z" fill="#034e6e"/></svg></div>
<div class="abs" style="left:1311px;top:256px;line-height:0"><svg width="21" height="21" viewBox="0 0 21 21" style="overflow:visible"><g transform="translate(0.6,19.6) rotate(-45)"><path d="M0 0 L5.5 -3.5 H18.6 V3.5 H5.5 Z" fill="#034e6e"/><path d="M19.8 -3.5 H22.4 A3.5 3.5 0 0 1 22.4 3.5 H19.8 Z" fill="#034e6e"/><rect x="7.2" y="-1.1" width="9.6" height="1.3" fill="#fff"/><path d="M1.7 0.2 L5 -2 V2.4 Z" fill="#fff"/><path d="M0 0 L2 -1.2 V1.2 Z" fill="#034e6e"/></g></svg></div>
<div class="abs" style="left:1345px;top:255px;line-height:0"><svg width="19" height="21" viewBox="0 0 19 21"><path d="M5.8 3.2 L6.8 1.2 Q7.2 0.6 8 0.6 H11 Q11.8 0.6 12.2 1.2 L13.2 3.2" stroke="#034e6e" stroke-width="2" fill="none" stroke-linejoin="round"/><rect x="0.6" y="3" width="17.8" height="2.3" rx="0.8" fill="#034e6e"/><path d="M2.6 4.5 V17.8 Q2.6 20.1 4.6 20.1 H14.4 Q16.4 20.1 16.4 17.8 V4.5" stroke="#034e6e" stroke-width="2.2" fill="none"/><rect x="6.4" y="8" width="1.6" height="9.5" rx="0.5" fill="#1d3b5e"/><rect x="11" y="8" width="1.6" height="9.5" rx="0.5" fill="#1d3b5e"/></svg></div>
<div class="abs" style="left:1px;top:276px;width:1367px;height:23px;background:#fff"></div>
<div class="c ctr cd" style="left:33px;top:276px;width:78px">ATFRZ</div>
<div class="c ctr cd" style="left:112px;top:276px;width:82px">SIKOP</div>
<div class="c ctr wk" style="left:195px;top:276px;width:89px">Weekday</div>
<div class="c rt" style="left:285px;top:276px;width:109px">0d. 9h.</div>
<div class="c rt" style="left:395px;top:276px;width:109px">$134</div>
<div class="c rt" style="left:505px;top:276px;width:109px">$268</div>
<div class="c rt" style="left:615px;top:276px;width:109px">$268</div>
<div class="c rt" style="left:725px;top:276px;width:164px">0</div>
<div class="c rt" style="left:890px;top:276px;width:124px">-</div>
<div class="c ctr one" style="left:1015px;top:276px;width:99px">7</div>
<div class="c ctr one" style="left:1115px;top:276px;width:79px">N</div>
<div class="c ctr" style="left:1195px;top:276px;width:109px"></div>
<div class="abs" style="left:8px;top:280px;line-height:0"><svg width="19" height="18" viewBox="0 0 19 18"><path d="M7.4 0h4.1v7h7.5v3.9h-7.5V18H7.4v-7.1H0V7h7.4z" fill="#034e6e"/></svg></div>
<div class="abs" style="left:1311px;top:279px;line-height:0"><svg width="21" height="21" viewBox="0 0 21 21" style="overflow:visible"><g transform="translate(0.6,19.6) rotate(-45)"><path d="M0 0 L5.5 -3.5 H18.6 V3.5 H5.5 Z" fill="#034e6e"/><path d="M19.8 -3.5 H22.4 A3.5 3.5 0 0 1 22.4 3.5 H19.8 Z" fill="#034e6e"/><rect x="7.2" y="-1.1" width="9.6" height="1.3" fill="#fff"/><path d="M1.7 0.2 L5 -2 V2.4 Z" fill="#fff"/><path d="M0 0 L2 -1.2 V1.2 Z" fill="#034e6e"/></g></svg></div>
<div class="abs" style="left:1345px;top:278px;line-height:0"><svg width="19" height="21" viewBox="0 0 19 21"><path d="M5.8 3.2 L6.8 1.2 Q7.2 0.6 8 0.6 H11 Q11.8 0.6 12.2 1.2 L13.2 3.2" stroke="#034e6e" stroke-width="2" fill="none" stroke-linejoin="round"/><rect x="0.6" y="3" width="17.8" height="2.3" rx="0.8" fill="#034e6e"/><path d="M2.6 4.5 V17.8 Q2.6 20.1 4.6 20.1 H14.4 Q16.4 20.1 16.4 17.8 V4.5" stroke="#034e6e" stroke-width="2.2" fill="none"/><rect x="6.4" y="8" width="1.6" height="9.5" rx="0.5" fill="#1d3b5e"/><rect x="11" y="8" width="1.6" height="9.5" rx="0.5" fill="#1d3b5e"/></svg></div>
<div class="abs" style="left:1px;top:299px;width:1367px;height:23px;background:#f9f9f9"></div>
<div class="c ctr cd" style="left:33px;top:299px;width:78px">ATFRZ</div>
<div class="c ctr cd" style="left:112px;top:299px;width:82px">ATLNZ</div>
<div class="c ctr wk" style="left:195px;top:299px;width:89px">Weekday</div>
<div class="c rt" style="left:285px;top:299px;width:109px">2d. 6h.</div>
<div class="c rt" style="left:395px;top:299px;width:109px">$100</div>
<div class="c rt" style="left:505px;top:299px;width:109px">$100</div>
<div class="c rt" style="left:615px;top:299px;width:109px">$100</div>
<div class="c rt" style="left:725px;top:299px;width:164px">7</div>
<div class="c rt" style="left:890px;top:299px;width:124px">14</div>
<div class="c ctr one" style="left:1015px;top:299px;width:99px">7</div>
<div class="c ctr one" style="left:1115px;top:299px;width:79px">N</div>
<div class="c ctr" style="left:1195px;top:299px;width:109px"></div>
<div class="abs" style="left:8px;top:303px;line-height:0"><svg width="19" height="18" viewBox="0 0 19 18"><path d="M7.4 0h4.1v7h7.5v3.9h-7.5V18H7.4v-7.1H0V7h7.4z" fill="#034e6e"/></svg></div>
<div class="abs" style="left:1311px;top:302px;line-height:0"><svg width="21" height="21" viewBox="0 0 21 21" style="overflow:visible"><g transform="translate(0.6,19.6) rotate(-45)"><path d="M0 0 L5.5 -3.5 H18.6 V3.5 H5.5 Z" fill="#034e6e"/><path d="M19.8 -3.5 H22.4 A3.5 3.5 0 0 1 22.4 3.5 H19.8 Z" fill="#034e6e"/><rect x="7.2" y="-1.1" width="9.6" height="1.3" fill="#fff"/><path d="M1.7 0.2 L5 -2 V2.4 Z" fill="#fff"/><path d="M0 0 L2 -1.2 V1.2 Z" fill="#034e6e"/></g></svg></div>
<div class="abs" style="left:1345px;top:301px;line-height:0"><svg width="19" height="21" viewBox="0 0 19 21"><path d="M5.8 3.2 L6.8 1.2 Q7.2 0.6 8 0.6 H11 Q11.8 0.6 12.2 1.2 L13.2 3.2" stroke="#034e6e" stroke-width="2" fill="none" stroke-linejoin="round"/><rect x="0.6" y="3" width="17.8" height="2.3" rx="0.8" fill="#034e6e"/><path d="M2.6 4.5 V17.8 Q2.6 20.1 4.6 20.1 H14.4 Q16.4 20.1 16.4 17.8 V4.5" stroke="#034e6e" stroke-width="2.2" fill="none"/><rect x="6.4" y="8" width="1.6" height="9.5" rx="0.5" fill="#1d3b5e"/><rect x="11" y="8" width="1.6" height="9.5" rx="0.5" fill="#1d3b5e"/></svg></div>
<div class="abs" style="left:1px;top:322px;width:1367px;height:23px;background:#fff"></div>
<div class="c ctr cd" style="left:33px;top:322px;width:78px">ATFRZ</div>
<div class="c ctr cd" style="left:112px;top:322px;width:82px">ATSZB</div>
<div class="c ctr wk" style="left:195px;top:322px;width:89px">Weekday</div>
<div class="c rt" style="left:285px;top:322px;width:109px">2d. 2h.</div>
<div class="c rt" style="left:395px;top:322px;width:109px">$100</div>
<div class="c rt" style="left:505px;top:322px;width:109px">$100</div>
<div class="c rt" style="left:615px;top:322px;width:109px">$100</div>
<div class="c rt or" style="left:725px;top:322px;width:164px"><span class="sm">0</span><span class="big">100</span></div>
<div class="c rt or" style="left:890px;top:322px;width:124px"><span class="sm">-</span><span class="big">100</span></div>
<div class="c ctr one" style="left:1015px;top:322px;width:99px">7</div>
<div class="c ctr one" style="left:1115px;top:322px;width:79px">N</div>
<div class="c ctr" style="left:1195px;top:322px;width:109px"></div>
<div class="abs" style="left:8px;top:326px;line-height:0"><svg width="19" height="18" viewBox="0 0 19 18"><path d="M7.4 0h4.1v7h7.5v3.9h-7.5V18H7.4v-7.1H0V7h7.4z" fill="#034e6e"/></svg></div>
<div class="abs" style="left:1311px;top:325px;line-height:0"><svg width="21" height="21" viewBox="0 0 21 21" style="overflow:visible"><g transform="translate(0.6,19.6) rotate(-45)"><path d="M0 0 L5.5 -3.5 H18.6 V3.5 H5.5 Z" fill="#034e6e"/><path d="M19.8 -3.5 H22.4 A3.5 3.5 0 0 1 22.4 3.5 H19.8 Z" fill="#034e6e"/><rect x="7.2" y="-1.1" width="9.6" height="1.3" fill="#fff"/><path d="M1.7 0.2 L5 -2 V2.4 Z" fill="#fff"/><path d="M0 0 L2 -1.2 V1.2 Z" fill="#034e6e"/></g></svg></div>
<div class="abs" style="left:1345px;top:324px;line-height:0"><svg width="19" height="21" viewBox="0 0 19 21"><path d="M5.8 3.2 L6.8 1.2 Q7.2 0.6 8 0.6 H11 Q11.8 0.6 12.2 1.2 L13.2 3.2" stroke="#034e6e" stroke-width="2" fill="none" stroke-linejoin="round"/><rect x="0.6" y="3" width="17.8" height="2.3" rx="0.8" fill="#034e6e"/><path d="M2.6 4.5 V17.8 Q2.6 20.1 4.6 20.1 H14.4 Q16.4 20.1 16.4 17.8 V4.5" stroke="#034e6e" stroke-width="2.2" fill="none"/><rect x="6.4" y="8" width="1.6" height="9.5" rx="0.5" fill="#1d3b5e"/><rect x="11" y="8" width="1.6" height="9.5" rx="0.5" fill="#1d3b5e"/></svg></div>
<div class="abs" style="left:1px;top:345px;width:1367px;height:23px;background:#f9f9f9"></div>
<div class="c ctr cd" style="left:33px;top:345px;width:78px">ATGRZ</div>
<div class="c ctr cd" style="left:112px;top:345px;width:82px">ATLNZ</div>
<div class="c ctr wk" style="left:195px;top:345px;width:89px">Weekday</div>
<div class="c rt" style="left:285px;top:345px;width:109px">1d. 0h.</div>
<div class="c rt" style="left:395px;top:345px;width:109px">$100</div>
<div class="c rt" style="left:505px;top:345px;width:109px">$100</div>
<div class="c rt" style="left:615px;top:345px;width:109px">$100</div>
<div class="c rt" style="left:725px;top:345px;width:164px">14</div>
<div class="c rt" style="left:890px;top:345px;width:124px">21</div>
<div class="c ctr one" style="left:1015px;top:345px;width:99px">7</div>
<div class="c ctr one" style="left:1115px;top:345px;width:79px">N</div>
<div class="c ctr" style="left:1195px;top:345px;width:109px"></div>
<div class="abs" style="left:8px;top:349px;line-height:0"><svg width="19" height="18" viewBox="0 0 19 18"><path d="M7.4 0h4.1v7h7.5v3.9h-7.5V18H7.4v-7.1H0V7h7.4z" fill="#034e6e"/></svg></div>
<div class="abs" style="left:1311px;top:348px;line-height:0"><svg width="21" height="21" viewBox="0 0 21 21" style="overflow:visible"><g transform="translate(0.6,19.6) rotate(-45)"><path d="M0 0 L5.5 -3.5 H18.6 V3.5 H5.5 Z" fill="#034e6e"/><path d="M19.8 -3.5 H22.4 A3.5 3.5 0 0 1 22.4 3.5 H19.8 Z" fill="#034e6e"/><rect x="7.2" y="-1.1" width="9.6" height="1.3" fill="#fff"/><path d="M1.7 0.2 L5 -2 V2.4 Z" fill="#fff"/><path d="M0 0 L2 -1.2 V1.2 Z" fill="#034e6e"/></g></svg></div>
<div class="abs" style="left:1345px;top:347px;line-height:0"><svg width="19" height="21" viewBox="0 0 19 21"><path d="M5.8 3.2 L6.8 1.2 Q7.2 0.6 8 0.6 H11 Q11.8 0.6 12.2 1.2 L13.2 3.2" stroke="#034e6e" stroke-width="2" fill="none" stroke-linejoin="round"/><rect x="0.6" y="3" width="17.8" height="2.3" rx="0.8" fill="#034e6e"/><path d="M2.6 4.5 V17.8 Q2.6 20.1 4.6 20.1 H14.4 Q16.4 20.1 16.4 17.8 V4.5" stroke="#034e6e" stroke-width="2.2" fill="none"/><rect x="6.4" y="8" width="1.6" height="9.5" rx="0.5" fill="#1d3b5e"/><rect x="11" y="8" width="1.6" height="9.5" rx="0.5" fill="#1d3b5e"/></svg></div>
<div class="abs" style="left:1px;top:368px;width:1367px;height:23px;background:#fff"></div>
<div class="c ctr cd" style="left:33px;top:368px;width:78px">ATGRZ</div>
<div class="c ctr cd" style="left:112px;top:368px;width:82px">ATVIE</div>
<div class="c ctr wk" style="left:195px;top:368px;width:89px">Weekday</div>
<div class="c rt" style="left:285px;top:368px;width:109px">1d. 0h.</div>
<div class="c rt" style="left:395px;top:368px;width:109px">$100</div>
<div class="c rt" style="left:505px;top:368px;width:109px">$100</div>
<div class="c rt" style="left:615px;top:368px;width:109px">$100</div>
<div class="c rt" style="left:725px;top:368px;width:164px">0</div>
<div class="c rt" style="left:890px;top:368px;width:124px">-</div>
<div class="c ctr one" style="left:1015px;top:368px;width:99px">7</div>
<div class="c ctr one" style="left:1115px;top:368px;width:79px">N</div>
<div class="c ctr" style="left:1195px;top:368px;width:109px"></div>
<div class="abs" style="left:8px;top:372px;line-height:0"><svg width="19" height="18" viewBox="0 0 19 18"><path d="M7.4 0h4.1v7h7.5v3.9h-7.5V18H7.4v-7.1H0V7h7.4z" fill="#034e6e"/></svg></div>
<div class="abs" style="left:1311px;top:371px;line-height:0"><svg width="21" height="21" viewBox="0 0 21 21" style="overflow:visible"><g transform="translate(0.6,19.6) rotate(-45)"><path d="M0 0 L5.5 -3.5 H18.6 V3.5 H5.5 Z" fill="#034e6e"/><path d="M19.8 -3.5 H22.4 A3.5 3.5 0 0 1 22.4 3.5 H19.8 Z" fill="#034e6e"/><rect x="7.2" y="-1.1" width="9.6" height="1.3" fill="#fff"/><path d="M1.7 0.2 L5 -2 V2.4 Z" fill="#fff"/><path d="M0 0 L2 -1.2 V1.2 Z" fill="#034e6e"/></g></svg></div>
<div class="abs" style="left:1345px;top:370px;line-height:0"><svg width="19" height="21" viewBox="0 0 19 21"><path d="M5.8 3.2 L6.8 1.2 Q7.2 0.6 8 0.6 H11 Q11.8 0.6 12.2 1.2 L13.2 3.2" stroke="#034e6e" stroke-width="2" fill="none" stroke-linejoin="round"/><rect x="0.6" y="3" width="17.8" height="2.3" rx="0.8" fill="#034e6e"/><path d="M2.6 4.5 V17.8 Q2.6 20.1 4.6 20.1 H14.4 Q16.4 20.1 16.4 17.8 V4.5" stroke="#034e6e" stroke-width="2.2" fill="none"/><rect x="6.4" y="8" width="1.6" height="9.5" rx="0.5" fill="#1d3b5e"/><rect x="11" y="8" width="1.6" height="9.5" rx="0.5" fill="#1d3b5e"/></svg></div>
<div class="abs" style="left:1px;top:391px;width:1367px;height:23px;background:#f9f9f9"></div>
<div class="c ctr cd" style="left:33px;top:391px;width:78px">ATGRZ</div>
<div class="c ctr cd" style="left:112px;top:391px;width:82px">ATSZB</div>
<div class="c ctr wk" style="left:195px;top:391px;width:89px">Weekday</div>
<div class="c rt" style="left:285px;top:391px;width:109px">1d. 10h.</div>
<div class="c rt" style="left:395px;top:391px;width:109px">$100</div>
<div class="c rt" style="left:505px;top:391px;width:109px">$100</div>
<div class="c rt" style="left:615px;top:391px;width:109px">$100</div>
<div class="c rt" style="left:725px;top:391px;width:164px">21</div>
<div class="c rt" style="left:890px;top:391px;width:124px">35</div>
<div class="c ctr one" style="left:1015px;top:391px;width:99px">7</div>
<div class="c ctr one" style="left:1115px;top:391px;width:79px">N</div>
<div class="c ctr" style="left:1195px;top:391px;width:109px"></div>
<div class="abs" style="left:8px;top:395px;line-height:0"><svg width="19" height="18" viewBox="0 0 19 18"><path d="M7.4 0h4.1v7h7.5v3.9h-7.5V18H7.4v-7.1H0V7h7.4z" fill="#034e6e"/></svg></div>
<div class="abs" style="left:1311px;top:394px;line-height:0"><svg width="21" height="21" viewBox="0 0 21 21" style="overflow:visible"><g transform="translate(0.6,19.6) rotate(-45)"><path d="M0 0 L5.5 -3.5 H18.6 V3.5 H5.5 Z" fill="#034e6e"/><path d="M19.8 -3.5 H22.4 A3.5 3.5 0 0 1 22.4 3.5 H19.8 Z" fill="#034e6e"/><rect x="7.2" y="-1.1" width="9.6" height="1.3" fill="#fff"/><path d="M1.7 0.2 L5 -2 V2.4 Z" fill="#fff"/><path d="M0 0 L2 -1.2 V1.2 Z" fill="#034e6e"/></g></svg></div>
<div class="abs" style="left:1345px;top:393px;line-height:0"><svg width="19" height="21" viewBox="0 0 19 21"><path d="M5.8 3.2 L6.8 1.2 Q7.2 0.6 8 0.6 H11 Q11.8 0.6 12.2 1.2 L13.2 3.2" stroke="#034e6e" stroke-width="2" fill="none" stroke-linejoin="round"/><rect x="0.6" y="3" width="17.8" height="2.3" rx="0.8" fill="#034e6e"/><path d="M2.6 4.5 V17.8 Q2.6 20.1 4.6 20.1 H14.4 Q16.4 20.1 16.4 17.8 V4.5" stroke="#034e6e" stroke-width="2.2" fill="none"/><rect x="6.4" y="8" width="1.6" height="9.5" rx="0.5" fill="#1d3b5e"/><rect x="11" y="8" width="1.6" height="9.5" rx="0.5" fill="#1d3b5e"/></svg></div>
<div class="abs" style="left:1px;top:414px;width:1367px;height:23px;background:#fff"></div>
<div class="c ctr cd" style="left:33px;top:414px;width:78px">ATGRZ</div>
<div class="c ctr cd" style="left:112px;top:414px;width:82px">SIKOP</div>
<div class="c ctr wk" style="left:195px;top:414px;width:89px">Weekday</div>
<div class="c rt" style="left:285px;top:414px;width:109px">1d. 17h.</div>
<div class="c rt" style="left:395px;top:414px;width:109px">$100</div>
<div class="c rt" style="left:505px;top:414px;width:109px">$100</div>
<div class="c rt" style="left:615px;top:414px;width:109px">$100</div>
<div class="c rt" style="left:725px;top:414px;width:164px">14</div>
<div class="c rt" style="left:890px;top:414px;width:124px">28</div>
<div class="c ctr one" style="left:1015px;top:414px;width:99px">7</div>
<div class="c ctr one" style="left:1115px;top:414px;width:79px">N</div>
<div class="c ctr" style="left:1195px;top:414px;width:109px"></div>
<div class="abs" style="left:8px;top:418px;line-height:0"><svg width="19" height="18" viewBox="0 0 19 18"><path d="M7.4 0h4.1v7h7.5v3.9h-7.5V18H7.4v-7.1H0V7h7.4z" fill="#034e6e"/></svg></div>
<div class="abs" style="left:1311px;top:417px;line-height:0"><svg width="21" height="21" viewBox="0 0 21 21" style="overflow:visible"><g transform="translate(0.6,19.6) rotate(-45)"><path d="M0 0 L5.5 -3.5 H18.6 V3.5 H5.5 Z" fill="#034e6e"/><path d="M19.8 -3.5 H22.4 A3.5 3.5 0 0 1 22.4 3.5 H19.8 Z" fill="#034e6e"/><rect x="7.2" y="-1.1" width="9.6" height="1.3" fill="#fff"/><path d="M1.7 0.2 L5 -2 V2.4 Z" fill="#fff"/><path d="M0 0 L2 -1.2 V1.2 Z" fill="#034e6e"/></g></svg></div>
<div class="abs" style="left:1345px;top:416px;line-height:0"><svg width="19" height="21" viewBox="0 0 19 21"><path d="M5.8 3.2 L6.8 1.2 Q7.2 0.6 8 0.6 H11 Q11.8 0.6 12.2 1.2 L13.2 3.2" stroke="#034e6e" stroke-width="2" fill="none" stroke-linejoin="round"/><rect x="0.6" y="3" width="17.8" height="2.3" rx="0.8" fill="#034e6e"/><path d="M2.6 4.5 V17.8 Q2.6 20.1 4.6 20.1 H14.4 Q16.4 20.1 16.4 17.8 V4.5" stroke="#034e6e" stroke-width="2.2" fill="none"/><rect x="6.4" y="8" width="1.6" height="9.5" rx="0.5" fill="#1d3b5e"/><rect x="11" y="8" width="1.6" height="9.5" rx="0.5" fill="#1d3b5e"/></svg></div>
<div class="abs" style="left:1px;top:437px;width:1367px;height:23px;background:#f9f9f9"></div>
<div class="c ctr cd" style="left:33px;top:437px;width:78px">ATLNZ</div>
<div class="c ctr cd" style="left:112px;top:437px;width:82px">ATGRZ</div>
<div class="c ctr wk" style="left:195px;top:437px;width:89px">Weekday</div>
<div class="c rt" style="left:285px;top:437px;width:109px">1d. 0h.</div>
<div class="c rt" style="left:395px;top:437px;width:109px">$100</div>
<div class="c rt" style="left:505px;top:437px;width:109px">$100</div>
<div class="c rt" style="left:615px;top:437px;width:109px">$100</div>
<div class="c rt" style="left:725px;top:437px;width:164px">0</div>
<div class="c rt" style="left:890px;top:437px;width:124px">-</div>
<div class="c ctr one" style="left:1015px;top:437px;width:99px">7</div>
<div class="c ctr one" style="left:1115px;top:437px;width:79px">N</div>
<div class="c ctr" style="left:1195px;top:437px;width:109px"></div>
<div class="abs" style="left:8px;top:441px;line-height:0"><svg width="19" height="18" viewBox="0 0 19 18"><path d="M7.4 0h4.1v7h7.5v3.9h-7.5V18H7.4v-7.1H0V7h7.4z" fill="#034e6e"/></svg></div>
<div class="abs" style="left:1311px;top:440px;line-height:0"><svg width="21" height="21" viewBox="0 0 21 21" style="overflow:visible"><g transform="translate(0.6,19.6) rotate(-45)"><path d="M0 0 L5.5 -3.5 H18.6 V3.5 H5.5 Z" fill="#034e6e"/><path d="M19.8 -3.5 H22.4 A3.5 3.5 0 0 1 22.4 3.5 H19.8 Z" fill="#034e6e"/><rect x="7.2" y="-1.1" width="9.6" height="1.3" fill="#fff"/><path d="M1.7 0.2 L5 -2 V2.4 Z" fill="#fff"/><path d="M0 0 L2 -1.2 V1.2 Z" fill="#034e6e"/></g></svg></div>
<div class="abs" style="left:1345px;top:439px;line-height:0"><svg width="19" height="21" viewBox="0 0 19 21"><path d="M5.8 3.2 L6.8 1.2 Q7.2 0.6 8 0.6 H11 Q11.8 0.6 12.2 1.2 L13.2 3.2" stroke="#034e6e" stroke-width="2" fill="none" stroke-linejoin="round"/><rect x="0.6" y="3" width="17.8" height="2.3" rx="0.8" fill="#034e6e"/><path d="M2.6 4.5 V17.8 Q2.6 20.1 4.6 20.1 H14.4 Q16.4 20.1 16.4 17.8 V4.5" stroke="#034e6e" stroke-width="2.2" fill="none"/><rect x="6.4" y="8" width="1.6" height="9.5" rx="0.5" fill="#1d3b5e"/><rect x="11" y="8" width="1.6" height="9.5" rx="0.5" fill="#1d3b5e"/></svg></div>
<div class="abs" style="left:1px;top:460px;width:1367px;height:23px;background:#fff"></div>
<div class="c ctr cd" style="left:33px;top:460px;width:78px">ATLNZ</div>
<div class="c ctr cd" style="left:112px;top:460px;width:82px">ATSZB</div>
<div class="c ctr wk" style="left:195px;top:460px;width:89px">Weekday</div>
<div class="c rt" style="left:285px;top:460px;width:109px">3d. 0h.</div>
<div class="c rt" style="left:395px;top:460px;width:109px">$100</div>
<div class="c rt" style="left:505px;top:460px;width:109px">$100</div>
<div class="c rt" style="left:615px;top:460px;width:109px">$100</div>
<div class="c rt" style="left:725px;top:460px;width:164px">14</div>
<div class="c rt" style="left:890px;top:460px;width:124px">14</div>
<div class="c ctr one" style="left:1015px;top:460px;width:99px">7</div>
<div class="c ctr one" style="left:1115px;top:460px;width:79px">N</div>
<div class="c ctr" style="left:1195px;top:460px;width:109px"></div>
<div class="abs" style="left:8px;top:464px;line-height:0"><svg width="19" height="18" viewBox="0 0 19 18"><path d="M7.4 0h4.1v7h7.5v3.9h-7.5V18H7.4v-7.1H0V7h7.4z" fill="#034e6e"/></svg></div>
<div class="abs" style="left:1311px;top:463px;line-height:0"><svg width="21" height="21" viewBox="0 0 21 21" style="overflow:visible"><g transform="translate(0.6,19.6) rotate(-45)"><path d="M0 0 L5.5 -3.5 H18.6 V3.5 H5.5 Z" fill="#034e6e"/><path d="M19.8 -3.5 H22.4 A3.5 3.5 0 0 1 22.4 3.5 H19.8 Z" fill="#034e6e"/><rect x="7.2" y="-1.1" width="9.6" height="1.3" fill="#fff"/><path d="M1.7 0.2 L5 -2 V2.4 Z" fill="#fff"/><path d="M0 0 L2 -1.2 V1.2 Z" fill="#034e6e"/></g></svg></div>
<div class="abs" style="left:1345px;top:462px;line-height:0"><svg width="19" height="21" viewBox="0 0 19 21"><path d="M5.8 3.2 L6.8 1.2 Q7.2 0.6 8 0.6 H11 Q11.8 0.6 12.2 1.2 L13.2 3.2" stroke="#034e6e" stroke-width="2" fill="none" stroke-linejoin="round"/><rect x="0.6" y="3" width="17.8" height="2.3" rx="0.8" fill="#034e6e"/><path d="M2.6 4.5 V17.8 Q2.6 20.1 4.6 20.1 H14.4 Q16.4 20.1 16.4 17.8 V4.5" stroke="#034e6e" stroke-width="2.2" fill="none"/><rect x="6.4" y="8" width="1.6" height="9.5" rx="0.5" fill="#1d3b5e"/><rect x="11" y="8" width="1.6" height="9.5" rx="0.5" fill="#1d3b5e"/></svg></div>
<div class="abs" style="left:1px;top:483px;width:1367px;height:23px;background:#f9f9f9"></div>
<div class="c ctr cd" style="left:33px;top:483px;width:78px">ATLNZ</div>
<div class="c ctr cd" style="left:112px;top:483px;width:82px">ATWLF</div>
<div class="c ctr wk" style="left:195px;top:483px;width:89px">Weekday</div>
<div class="c rt" style="left:285px;top:483px;width:109px">4d. 5h.</div>
<div class="c rt" style="left:395px;top:483px;width:109px">$100</div>
<div class="c rt" style="left:505px;top:483px;width:109px">$100</div>
<div class="c rt" style="left:615px;top:483px;width:109px">$100</div>
<div class="c rt" style="left:725px;top:483px;width:164px">0</div>
<div class="c rt" style="left:890px;top:483px;width:124px">-</div>
<div class="c ctr one" style="left:1015px;top:483px;width:99px">7</div>
<div class="c ctr one" style="left:1115px;top:483px;width:79px">N</div>
<div class="c ctr" style="left:1195px;top:483px;width:109px"></div>
<div class="abs" style="left:8px;top:487px;line-height:0"><svg width="19" height="18" viewBox="0 0 19 18"><path d="M7.4 0h4.1v7h7.5v3.9h-7.5V18H7.4v-7.1H0V7h7.4z" fill="#034e6e"/></svg></div>
<div class="abs" style="left:1311px;top:486px;line-height:0"><svg width="21" height="21" viewBox="0 0 21 21" style="overflow:visible"><g transform="translate(0.6,19.6) rotate(-45)"><path d="M0 0 L5.5 -3.5 H18.6 V3.5 H5.5 Z" fill="#034e6e"/><path d="M19.8 -3.5 H22.4 A3.5 3.5 0 0 1 22.4 3.5 H19.8 Z" fill="#034e6e"/><rect x="7.2" y="-1.1" width="9.6" height="1.3" fill="#fff"/><path d="M1.7 0.2 L5 -2 V2.4 Z" fill="#fff"/><path d="M0 0 L2 -1.2 V1.2 Z" fill="#034e6e"/></g></svg></div>
<div class="abs" style="left:1345px;top:485px;line-height:0"><svg width="19" height="21" viewBox="0 0 19 21"><path d="M5.8 3.2 L6.8 1.2 Q7.2 0.6 8 0.6 H11 Q11.8 0.6 12.2 1.2 L13.2 3.2" stroke="#034e6e" stroke-width="2" fill="none" stroke-linejoin="round"/><rect x="0.6" y="3" width="17.8" height="2.3" rx="0.8" fill="#034e6e"/><path d="M2.6 4.5 V17.8 Q2.6 20.1 4.6 20.1 H14.4 Q16.4 20.1 16.4 17.8 V4.5" stroke="#034e6e" stroke-width="2.2" fill="none"/><rect x="6.4" y="8" width="1.6" height="9.5" rx="0.5" fill="#1d3b5e"/><rect x="11" y="8" width="1.6" height="9.5" rx="0.5" fill="#1d3b5e"/></svg></div>
<div class="abs" style="left:1px;top:506px;width:1367px;height:23px;background:#fff"></div>
<div class="c ctr cd" style="left:33px;top:506px;width:78px">ATLNZ</div>
<div class="c ctr cd" style="left:112px;top:506px;width:82px">DEHAM</div>
<div class="c ctr wk" style="left:195px;top:506px;width:89px">Weekday</div>
<div class="c rt" style="left:285px;top:506px;width:109px">1d. 15h.</div>
<div class="c rt" style="left:395px;top:506px;width:109px">$100</div>
<div class="c rt" style="left:505px;top:506px;width:109px">$100</div>
<div class="c rt" style="left:615px;top:506px;width:109px">$100</div>
<div class="c rt" style="left:725px;top:506px;width:164px">0</div>
<div class="c rt" style="left:890px;top:506px;width:124px">-</div>
<div class="c ctr one" style="left:1015px;top:506px;width:99px">7</div>
<div class="c ctr one" style="left:1115px;top:506px;width:79px">N</div>
<div class="c ctr" style="left:1195px;top:506px;width:109px"></div>
<div class="abs" style="left:8px;top:510px;line-height:0"><svg width="19" height="18" viewBox="0 0 19 18"><path d="M7.4 0h4.1v7h7.5v3.9h-7.5V18H7.4v-7.1H0V7h7.4z" fill="#034e6e"/></svg></div>
<div class="abs" style="left:1311px;top:509px;line-height:0"><svg width="21" height="21" viewBox="0 0 21 21" style="overflow:visible"><g transform="translate(0.6,19.6) rotate(-45)"><path d="M0 0 L5.5 -3.5 H18.6 V3.5 H5.5 Z" fill="#034e6e"/><path d="M19.8 -3.5 H22.4 A3.5 3.5 0 0 1 22.4 3.5 H19.8 Z" fill="#034e6e"/><rect x="7.2" y="-1.1" width="9.6" height="1.3" fill="#fff"/><path d="M1.7 0.2 L5 -2 V2.4 Z" fill="#fff"/><path d="M0 0 L2 -1.2 V1.2 Z" fill="#034e6e"/></g></svg></div>
<div class="abs" style="left:1345px;top:508px;line-height:0"><svg width="19" height="21" viewBox="0 0 19 21"><path d="M5.8 3.2 L6.8 1.2 Q7.2 0.6 8 0.6 H11 Q11.8 0.6 12.2 1.2 L13.2 3.2" stroke="#034e6e" stroke-width="2" fill="none" stroke-linejoin="round"/><rect x="0.6" y="3" width="17.8" height="2.3" rx="0.8" fill="#034e6e"/><path d="M2.6 4.5 V17.8 Q2.6 20.1 4.6 20.1 H14.4 Q16.4 20.1 16.4 17.8 V4.5" stroke="#034e6e" stroke-width="2.2" fill="none"/><rect x="6.4" y="8" width="1.6" height="9.5" rx="0.5" fill="#1d3b5e"/><rect x="11" y="8" width="1.6" height="9.5" rx="0.5" fill="#1d3b5e"/></svg></div>
<div class="abs" style="left:1px;top:529px;width:1367px;height:23px;background:#f9f9f9"></div>
<div class="c ctr cd" style="left:33px;top:529px;width:78px">ATSZB</div>
<div class="c ctr cd" style="left:112px;top:529px;width:82px">ATLNZ</div>
<div class="c ctr wk" style="left:195px;top:529px;width:89px">Weekday</div>
<div class="c rt" style="left:285px;top:529px;width:109px">3d. 0h.</div>
<div class="c rt" style="left:395px;top:529px;width:109px">$100</div>
<div class="c rt" style="left:505px;top:529px;width:109px">$100</div>
<div class="c rt" style="left:615px;top:529px;width:109px">$100</div>
<div class="c rt" style="left:725px;top:529px;width:164px">0</div>
<div class="c rt" style="left:890px;top:529px;width:124px">-</div>
<div class="c ctr one" style="left:1015px;top:529px;width:99px">7</div>
<div class="c ctr one" style="left:1115px;top:529px;width:79px">N</div>
<div class="c ctr" style="left:1195px;top:529px;width:109px"></div>
<div class="abs" style="left:8px;top:533px;line-height:0"><svg width="19" height="18" viewBox="0 0 19 18"><path d="M7.4 0h4.1v7h7.5v3.9h-7.5V18H7.4v-7.1H0V7h7.4z" fill="#034e6e"/></svg></div>
<div class="abs" style="left:1311px;top:532px;line-height:0"><svg width="21" height="21" viewBox="0 0 21 21" style="overflow:visible"><g transform="translate(0.6,19.6) rotate(-45)"><path d="M0 0 L5.5 -3.5 H18.6 V3.5 H5.5 Z" fill="#034e6e"/><path d="M19.8 -3.5 H22.4 A3.5 3.5 0 0 1 22.4 3.5 H19.8 Z" fill="#034e6e"/><rect x="7.2" y="-1.1" width="9.6" height="1.3" fill="#fff"/><path d="M1.7 0.2 L5 -2 V2.4 Z" fill="#fff"/><path d="M0 0 L2 -1.2 V1.2 Z" fill="#034e6e"/></g></svg></div>
<div class="abs" style="left:1345px;top:531px;line-height:0"><svg width="19" height="21" viewBox="0 0 19 21"><path d="M5.8 3.2 L6.8 1.2 Q7.2 0.6 8 0.6 H11 Q11.8 0.6 12.2 1.2 L13.2 3.2" stroke="#034e6e" stroke-width="2" fill="none" stroke-linejoin="round"/><rect x="0.6" y="3" width="17.8" height="2.3" rx="0.8" fill="#034e6e"/><path d="M2.6 4.5 V17.8 Q2.6 20.1 4.6 20.1 H14.4 Q16.4 20.1 16.4 17.8 V4.5" stroke="#034e6e" stroke-width="2.2" fill="none"/><rect x="6.4" y="8" width="1.6" height="9.5" rx="0.5" fill="#1d3b5e"/><rect x="11" y="8" width="1.6" height="9.5" rx="0.5" fill="#1d3b5e"/></svg></div>
<div class="abs" style="left:1px;top:552px;width:1367px;height:23px;background:#fff"></div>
<div class="c ctr cd" style="left:33px;top:552px;width:78px">ATSZB</div>
<div class="c ctr cd" style="left:112px;top:552px;width:82px">DEBRV</div>
<div class="c ctr wk" style="left:195px;top:552px;width:89px">Weekday</div>
<div class="c rt" style="left:285px;top:552px;width:109px">4d. 7h.</div>
<div class="c rt" style="left:395px;top:552px;width:109px">$100</div>
<div class="c rt" style="left:505px;top:552px;width:109px">$100</div>
<div class="c rt" style="left:615px;top:552px;width:109px">$100</div>
<div class="c rt" style="left:725px;top:552px;width:164px">0</div>
<div class="c rt" style="left:890px;top:552px;width:124px">-</div>
<div class="c ctr one" style="left:1015px;top:552px;width:99px">7</div>
<div class="c ctr one" style="left:1115px;top:552px;width:79px">N</div>
<div class="c ctr" style="left:1195px;top:552px;width:109px"></div>
<div class="abs" style="left:8px;top:556px;line-height:0"><svg width="19" height="18" viewBox="0 0 19 18"><path d="M7.4 0h4.1v7h7.5v3.9h-7.5V18H7.4v-7.1H0V7h7.4z" fill="#034e6e"/></svg></div>
<div class="abs" style="left:1311px;top:555px;line-height:0"><svg width="21" height="21" viewBox="0 0 21 21" style="overflow:visible"><g transform="translate(0.6,19.6) rotate(-45)"><path d="M0 0 L5.5 -3.5 H18.6 V3.5 H5.5 Z" fill="#034e6e"/><path d="M19.8 -3.5 H22.4 A3.5 3.5 0 0 1 22.4 3.5 H19.8 Z" fill="#034e6e"/><rect x="7.2" y="-1.1" width="9.6" height="1.3" fill="#fff"/><path d="M1.7 0.2 L5 -2 V2.4 Z" fill="#fff"/><path d="M0 0 L2 -1.2 V1.2 Z" fill="#034e6e"/></g></svg></div>
<div class="abs" style="left:1345px;top:554px;line-height:0"><svg width="19" height="21" viewBox="0 0 19 21"><path d="M5.8 3.2 L6.8 1.2 Q7.2 0.6 8 0.6 H11 Q11.8 0.6 12.2 1.2 L13.2 3.2" stroke="#034e6e" stroke-width="2" fill="none" stroke-linejoin="round"/><rect x="0.6" y="3" width="17.8" height="2.3" rx="0.8" fill="#034e6e"/><path d="M2.6 4.5 V17.8 Q2.6 20.1 4.6 20.1 H14.4 Q16.4 20.1 16.4 17.8 V4.5" stroke="#034e6e" stroke-width="2.2" fill="none"/><rect x="6.4" y="8" width="1.6" height="9.5" rx="0.5" fill="#1d3b5e"/><rect x="11" y="8" width="1.6" height="9.5" rx="0.5" fill="#1d3b5e"/></svg></div>
<div class="abs" style="left:1px;top:575px;width:1367px;height:23px;background:#f9f9f9"></div>
<div class="c ctr cd" style="left:33px;top:575px;width:78px">ATSZB</div>
<div class="c ctr cd" style="left:112px;top:575px;width:82px">DEHAM</div>
<div class="c ctr wk" style="left:195px;top:575px;width:89px">Weekday</div>
<div class="c rt" style="left:285px;top:575px;width:109px">2d. 6h.</div>
<div class="c rt" style="left:395px;top:575px;width:109px">$100</div>
<div class="c rt" style="left:505px;top:575px;width:109px">$100</div>
<div class="c rt" style="left:615px;top:575px;width:109px">$100</div>
<div class="c rt" style="left:725px;top:575px;width:164px">0</div>
<div class="c rt" style="left:890px;top:575px;width:124px">-</div>
<div class="c ctr one" style="left:1015px;top:575px;width:99px">7</div>
<div class="c ctr one" style="left:1115px;top:575px;width:79px">N</div>
<div class="c ctr" style="left:1195px;top:575px;width:109px"></div>
<div class="abs" style="left:8px;top:579px;line-height:0"><svg width="19" height="18" viewBox="0 0 19 18"><path d="M7.4 0h4.1v7h7.5v3.9h-7.5V18H7.4v-7.1H0V7h7.4z" fill="#034e6e"/></svg></div>
<div class="abs" style="left:1311px;top:578px;line-height:0"><svg width="21" height="21" viewBox="0 0 21 21" style="overflow:visible"><g transform="translate(0.6,19.6) rotate(-45)"><path d="M0 0 L5.5 -3.5 H18.6 V3.5 H5.5 Z" fill="#034e6e"/><path d="M19.8 -3.5 H22.4 A3.5 3.5 0 0 1 22.4 3.5 H19.8 Z" fill="#034e6e"/><rect x="7.2" y="-1.1" width="9.6" height="1.3" fill="#fff"/><path d="M1.7 0.2 L5 -2 V2.4 Z" fill="#fff"/><path d="M0 0 L2 -1.2 V1.2 Z" fill="#034e6e"/></g></svg></div>
<div class="abs" style="left:1345px;top:577px;line-height:0"><svg width="19" height="21" viewBox="0 0 19 21"><path d="M5.8 3.2 L6.8 1.2 Q7.2 0.6 8 0.6 H11 Q11.8 0.6 12.2 1.2 L13.2 3.2" stroke="#034e6e" stroke-width="2" fill="none" stroke-linejoin="round"/><rect x="0.6" y="3" width="17.8" height="2.3" rx="0.8" fill="#034e6e"/><path d="M2.6 4.5 V17.8 Q2.6 20.1 4.6 20.1 H14.4 Q16.4 20.1 16.4 17.8 V4.5" stroke="#034e6e" stroke-width="2.2" fill="none"/><rect x="6.4" y="8" width="1.6" height="9.5" rx="0.5" fill="#1d3b5e"/><rect x="11" y="8" width="1.6" height="9.5" rx="0.5" fill="#1d3b5e"/></svg></div>
<div class="abs" style="left:1px;top:598px;width:1367px;height:23px;background:#fff"></div>
<div class="c ctr cd" style="left:33px;top:598px;width:78px">ATSZB</div>
<div class="c ctr cd" style="left:112px;top:598px;width:82px">ATVIE</div>
<div class="c ctr wk" style="left:195px;top:598px;width:89px">Weekday</div>
<div class="c rt" style="left:285px;top:598px;width:109px">1d. 20h.</div>
<div class="c rt" style="left:395px;top:598px;width:109px">$100</div>
<div class="c rt" style="left:505px;top:598px;width:109px">$100</div>
<div class="c rt" style="left:615px;top:598px;width:109px">$100</div>
<div class="c rt" style="left:725px;top:598px;width:164px">14</div>
<div class="c rt" style="left:890px;top:598px;width:124px">14</div>
<div class="c ctr one" style="left:1015px;top:598px;width:99px">7</div>
<div class="c ctr one" style="left:1115px;top:598px;width:79px">N</div>
<div class="c ctr" style="left:1195px;top:598px;width:109px"></div>
<div class="abs" style="left:8px;top:602px;line-height:0"><svg width="19" height="18" viewBox="0 0 19 18"><path d="M7.4 0h4.1v7h7.5v3.9h-7.5V18H7.4v-7.1H0V7h7.4z" fill="#034e6e"/></svg></div>
<div class="abs" style="left:1311px;top:601px;line-height:0"><svg width="21" height="21" viewBox="0 0 21 21" style="overflow:visible"><g transform="translate(0.6,19.6) rotate(-45)"><path d="M0 0 L5.5 -3.5 H18.6 V3.5 H5.5 Z" fill="#034e6e"/><path d="M19.8 -3.5 H22.4 A3.5 3.5 0 0 1 22.4 3.5 H19.8 Z" fill="#034e6e"/><rect x="7.2" y="-1.1" width="9.6" height="1.3" fill="#fff"/><path d="M1.7 0.2 L5 -2 V2.4 Z" fill="#fff"/><path d="M0 0 L2 -1.2 V1.2 Z" fill="#034e6e"/></g></svg></div>
<div class="abs" style="left:1345px;top:600px;line-height:0"><svg width="19" height="21" viewBox="0 0 19 21"><path d="M5.8 3.2 L6.8 1.2 Q7.2 0.6 8 0.6 H11 Q11.8 0.6 12.2 1.2 L13.2 3.2" stroke="#034e6e" stroke-width="2" fill="none" stroke-linejoin="round"/><rect x="0.6" y="3" width="17.8" height="2.3" rx="0.8" fill="#034e6e"/><path d="M2.6 4.5 V17.8 Q2.6 20.1 4.6 20.1 H14.4 Q16.4 20.1 16.4 17.8 V4.5" stroke="#034e6e" stroke-width="2.2" fill="none"/><rect x="6.4" y="8" width="1.6" height="9.5" rx="0.5" fill="#1d3b5e"/><rect x="11" y="8" width="1.6" height="9.5" rx="0.5" fill="#1d3b5e"/></svg></div>
<div class="abs" style="left:1px;top:621px;width:1367px;height:23px;background:#f9f9f9"></div>
<div class="c ctr cd" style="left:33px;top:621px;width:78px">ATSZB</div>
<div class="c ctr cd" style="left:112px;top:621px;width:82px">ATWLF</div>
<div class="c ctr wk" style="left:195px;top:621px;width:89px">Weekday</div>
<div class="c rt" style="left:285px;top:621px;width:109px">2d. 15h.</div>
<div class="c rt" style="left:395px;top:621px;width:109px">$100</div>
<div class="c rt" style="left:505px;top:621px;width:109px">$100</div>
<div class="c rt" style="left:615px;top:621px;width:109px">$100</div>
<div class="c rt" style="left:725px;top:621px;width:164px">0</div>
<div class="c rt" style="left:890px;top:621px;width:124px">-</div>
<div class="c ctr one" style="left:1015px;top:621px;width:99px">7</div>
<div class="c ctr one" style="left:1115px;top:621px;width:79px">N</div>
<div class="c ctr" style="left:1195px;top:621px;width:109px"></div>
<div class="abs" style="left:8px;top:625px;line-height:0"><svg width="19" height="18" viewBox="0 0 19 18"><path d="M7.4 0h4.1v7h7.5v3.9h-7.5V18H7.4v-7.1H0V7h7.4z" fill="#034e6e"/></svg></div>
<div class="abs" style="left:1311px;top:624px;line-height:0"><svg width="21" height="21" viewBox="0 0 21 21" style="overflow:visible"><g transform="translate(0.6,19.6) rotate(-45)"><path d="M0 0 L5.5 -3.5 H18.6 V3.5 H5.5 Z" fill="#034e6e"/><path d="M19.8 -3.5 H22.4 A3.5 3.5 0 0 1 22.4 3.5 H19.8 Z" fill="#034e6e"/><rect x="7.2" y="-1.1" width="9.6" height="1.3" fill="#fff"/><path d="M1.7 0.2 L5 -2 V2.4 Z" fill="#fff"/><path d="M0 0 L2 -1.2 V1.2 Z" fill="#034e6e"/></g></svg></div>
<div class="abs" style="left:1345px;top:623px;line-height:0"><svg width="19" height="21" viewBox="0 0 19 21"><path d="M5.8 3.2 L6.8 1.2 Q7.2 0.6 8 0.6 H11 Q11.8 0.6 12.2 1.2 L13.2 3.2" stroke="#034e6e" stroke-width="2" fill="none" stroke-linejoin="round"/><rect x="0.6" y="3" width="17.8" height="2.3" rx="0.8" fill="#034e6e"/><path d="M2.6 4.5 V17.8 Q2.6 20.1 4.6 20.1 H14.4 Q16.4 20.1 16.4 17.8 V4.5" stroke="#034e6e" stroke-width="2.2" fill="none"/><rect x="6.4" y="8" width="1.6" height="9.5" rx="0.5" fill="#1d3b5e"/><rect x="11" y="8" width="1.6" height="9.5" rx="0.5" fill="#1d3b5e"/></svg></div>
<div class="abs" style="left:1px;top:644px;width:1367px;height:23px;background:#fff"></div>
<div class="c ctr cd" style="left:33px;top:644px;width:78px">ATSZB</div>
<div class="c ctr cd" style="left:112px;top:644px;width:82px">DEMUN</div>
<div class="c ctr wk" style="left:195px;top:644px;width:89px">Weekday</div>
<div class="c rt" style="left:285px;top:644px;width:109px">0d. 21h.</div>
<div class="c rt" style="left:395px;top:644px;width:109px">$329</div>
<div class="c rt" style="left:505px;top:644px;width:109px">$329</div>
<div class="c rt" style="left:615px;top:644px;width:109px">$329</div>
<div class="c rt" style="left:725px;top:644px;width:164px">7</div>
<div class="c rt" style="left:890px;top:644px;width:124px">7</div>
<div class="c ctr one" style="left:1015px;top:644px;width:99px">7</div>
<div class="c ctr one" style="left:1115px;top:644px;width:79px">N</div>
<div class="c ctr" style="left:1195px;top:644px;width:109px"></div>
<div class="abs" style="left:8px;top:648px;line-height:0"><svg width="19" height="18" viewBox="0 0 19 18"><path d="M7.4 0h4.1v7h7.5v3.9h-7.5V18H7.4v-7.1H0V7h7.4z" fill="#034e6e"/></svg></div>
<div class="abs" style="left:1311px;top:647px;line-height:0"><svg width="21" height="21" viewBox="0 0 21 21" style="overflow:visible"><g transform="translate(0.6,19.6) rotate(-45)"><path d="M0 0 L5.5 -3.5 H18.6 V3.5 H5.5 Z" fill="#034e6e"/><path d="M19.8 -3.5 H22.4 A3.5 3.5 0 0 1 22.4 3.5 H19.8 Z" fill="#034e6e"/><rect x="7.2" y="-1.1" width="9.6" height="1.3" fill="#fff"/><path d="M1.7 0.2 L5 -2 V2.4 Z" fill="#fff"/><path d="M0 0 L2 -1.2 V1.2 Z" fill="#034e6e"/></g></svg></div>
<div class="abs" style="left:1345px;top:646px;line-height:0"><svg width="19" height="21" viewBox="0 0 19 21"><path d="M5.8 3.2 L6.8 1.2 Q7.2 0.6 8 0.6 H11 Q11.8 0.6 12.2 1.2 L13.2 3.2" stroke="#034e6e" stroke-width="2" fill="none" stroke-linejoin="round"/><rect x="0.6" y="3" width="17.8" height="2.3" rx="0.8" fill="#034e6e"/><path d="M2.6 4.5 V17.8 Q2.6 20.1 4.6 20.1 H14.4 Q16.4 20.1 16.4 17.8 V4.5" stroke="#034e6e" stroke-width="2.2" fill="none"/><rect x="6.4" y="8" width="1.6" height="9.5" rx="0.5" fill="#1d3b5e"/><rect x="11" y="8" width="1.6" height="9.5" rx="0.5" fill="#1d3b5e"/></svg></div>
<div class="abs" style="left:1px;top:667px;width:1367px;height:23px;background:#f9f9f9"></div>
<div class="c ctr cd" style="left:33px;top:667px;width:78px">ATVIE</div>
<div class="c ctr cd" style="left:112px;top:667px;width:82px">ATLNZ</div>
<div class="c ctr wk" style="left:195px;top:667px;width:89px">Weekday</div>
<div class="c rt" style="left:285px;top:667px;width:109px">0d. 21h.</div>
<div class="c rt" style="left:395px;top:667px;width:109px">$100</div>
<div class="c rt" style="left:505px;top:667px;width:109px">$100</div>
<div class="c rt" style="left:615px;top:667px;width:109px">$100</div>
<div class="c rt" style="left:725px;top:667px;width:164px">7</div>
<div class="c rt" style="left:890px;top:667px;width:124px">21</div>
<div class="c ctr one" style="left:1015px;top:667px;width:99px">7</div>
<div class="c ctr one" style="left:1115px;top:667px;width:79px">N</div>
<div class="c ctr" style="left:1195px;top:667px;width:109px"></div>
<div class="abs" style="left:8px;top:671px;line-height:0"><svg width="19" height="18" viewBox="0 0 19 18"><path d="M7.4 0h4.1v7h7.5v3.9h-7.5V18H7.4v-7.1H0V7h7.4z" fill="#034e6e"/></svg></div>
<div class="abs" style="left:1311px;top:670px;line-height:0"><svg width="21" height="21" viewBox="0 0 21 21" style="overflow:visible"><g transform="translate(0.6,19.6) rotate(-45)"><path d="M0 0 L5.5 -3.5 H18.6 V3.5 H5.5 Z" fill="#034e6e"/><path d="M19.8 -3.5 H22.4 A3.5 3.5 0 0 1 22.4 3.5 H19.8 Z" fill="#034e6e"/><rect x="7.2" y="-1.1" width="9.6" height="1.3" fill="#fff"/><path d="M1.7 0.2 L5 -2 V2.4 Z" fill="#fff"/><path d="M0 0 L2 -1.2 V1.2 Z" fill="#034e6e"/></g></svg></div>
<div class="abs" style="left:1345px;top:669px;line-height:0"><svg width="19" height="21" viewBox="0 0 19 21"><path d="M5.8 3.2 L6.8 1.2 Q7.2 0.6 8 0.6 H11 Q11.8 0.6 12.2 1.2 L13.2 3.2" stroke="#034e6e" stroke-width="2" fill="none" stroke-linejoin="round"/><rect x="0.6" y="3" width="17.8" height="2.3" rx="0.8" fill="#034e6e"/><path d="M2.6 4.5 V17.8 Q2.6 20.1 4.6 20.1 H14.4 Q16.4 20.1 16.4 17.8 V4.5" stroke="#034e6e" stroke-width="2.2" fill="none"/><rect x="6.4" y="8" width="1.6" height="9.5" rx="0.5" fill="#1d3b5e"/><rect x="11" y="8" width="1.6" height="9.5" rx="0.5" fill="#1d3b5e"/></svg></div>
<div class="abs" style="left:1px;top:690px;width:1367px;height:23px;background:#fff"></div>
<div class="c ctr cd" style="left:33px;top:690px;width:78px">ATVIE</div>
<div class="c ctr cd" style="left:112px;top:690px;width:82px">DEBRV</div>
<div class="c ctr wk" style="left:195px;top:690px;width:89px">Weekday</div>
<div class="c rt" style="left:285px;top:690px;width:109px">3d. 12h.</div>
<div class="c rt" style="left:395px;top:690px;width:109px">$100</div>
<div class="c rt" style="left:505px;top:690px;width:109px">$100</div>
<div class="c rt" style="left:615px;top:690px;width:109px">$100</div>
<div class="c rt" style="left:725px;top:690px;width:164px">0</div>
<div class="c rt" style="left:890px;top:690px;width:124px">-</div>
<div class="c ctr one" style="left:1015px;top:690px;width:99px">7</div>
<div class="c ctr one" style="left:1115px;top:690px;width:79px">N</div>
<div class="c ctr" style="left:1195px;top:690px;width:109px"></div>
<div class="abs" style="left:8px;top:694px;line-height:0"><svg width="19" height="18" viewBox="0 0 19 18"><path d="M7.4 0h4.1v7h7.5v3.9h-7.5V18H7.4v-7.1H0V7h7.4z" fill="#034e6e"/></svg></div>
<div class="abs" style="left:1311px;top:693px;line-height:0"><svg width="21" height="21" viewBox="0 0 21 21" style="overflow:visible"><g transform="translate(0.6,19.6) rotate(-45)"><path d="M0 0 L5.5 -3.5 H18.6 V3.5 H5.5 Z" fill="#034e6e"/><path d="M19.8 -3.5 H22.4 A3.5 3.5 0 0 1 22.4 3.5 H19.8 Z" fill="#034e6e"/><rect x="7.2" y="-1.1" width="9.6" height="1.3" fill="#fff"/><path d="M1.7 0.2 L5 -2 V2.4 Z" fill="#fff"/><path d="M0 0 L2 -1.2 V1.2 Z" fill="#034e6e"/></g></svg></div>
<div class="abs" style="left:1345px;top:692px;line-height:0"><svg width="19" height="21" viewBox="0 0 19 21"><path d="M5.8 3.2 L6.8 1.2 Q7.2 0.6 8 0.6 H11 Q11.8 0.6 12.2 1.2 L13.2 3.2" stroke="#034e6e" stroke-width="2" fill="none" stroke-linejoin="round"/><rect x="0.6" y="3" width="17.8" height="2.3" rx="0.8" fill="#034e6e"/><path d="M2.6 4.5 V17.8 Q2.6 20.1 4.6 20.1 H14.4 Q16.4 20.1 16.4 17.8 V4.5" stroke="#034e6e" stroke-width="2.2" fill="none"/><rect x="6.4" y="8" width="1.6" height="9.5" rx="0.5" fill="#1d3b5e"/><rect x="11" y="8" width="1.6" height="9.5" rx="0.5" fill="#1d3b5e"/></svg></div>
<div class="abs" style="left:1px;top:713px;width:1367px;height:23px;background:#f9f9f9"></div>
<div class="c ctr cd" style="left:33px;top:713px;width:78px">ATVIE</div>
<div class="c ctr cd" style="left:112px;top:713px;width:82px">DEHAM</div>
<div class="c ctr wk" style="left:195px;top:713px;width:89px">Weekday</div>
<div class="c rt" style="left:285px;top:713px;width:109px">5d. 0h.</div>
<div class="c rt" style="left:395px;top:713px;width:109px">$100</div>
<div class="c rt" style="left:505px;top:713px;width:109px">$100</div>
<div class="c rt" style="left:615px;top:713px;width:109px">$100</div>
<div class="c rt" style="left:725px;top:713px;width:164px">0</div>
<div class="c rt" style="left:890px;top:713px;width:124px">-</div>
<div class="c ctr one" style="left:1015px;top:713px;width:99px">7</div>
<div class="c ctr one" style="left:1115px;top:713px;width:79px">N</div>
<div class="c ctr" style="left:1195px;top:713px;width:109px"></div>
<div class="abs" style="left:8px;top:717px;line-height:0"><svg width="19" height="18" viewBox="0 0 19 18"><path d="M7.4 0h4.1v7h7.5v3.9h-7.5V18H7.4v-7.1H0V7h7.4z" fill="#034e6e"/></svg></div>
<div class="abs" style="left:1311px;top:716px;line-height:0"><svg width="21" height="21" viewBox="0 0 21 21" style="overflow:visible"><g transform="translate(0.6,19.6) rotate(-45)"><path d="M0 0 L5.5 -3.5 H18.6 V3.5 H5.5 Z" fill="#034e6e"/><path d="M19.8 -3.5 H22.4 A3.5 3.5 0 0 1 22.4 3.5 H19.8 Z" fill="#034e6e"/><rect x="7.2" y="-1.1" width="9.6" height="1.3" fill="#fff"/><path d="M1.7 0.2 L5 -2 V2.4 Z" fill="#fff"/><path d="M0 0 L2 -1.2 V1.2 Z" fill="#034e6e"/></g></svg></div>
<div class="abs" style="left:1345px;top:715px;line-height:0"><svg width="19" height="21" viewBox="0 0 19 21"><path d="M5.8 3.2 L6.8 1.2 Q7.2 0.6 8 0.6 H11 Q11.8 0.6 12.2 1.2 L13.2 3.2" stroke="#034e6e" stroke-width="2" fill="none" stroke-linejoin="round"/><rect x="0.6" y="3" width="17.8" height="2.3" rx="0.8" fill="#034e6e"/><path d="M2.6 4.5 V17.8 Q2.6 20.1 4.6 20.1 H14.4 Q16.4 20.1 16.4 17.8 V4.5" stroke="#034e6e" stroke-width="2.2" fill="none"/><rect x="6.4" y="8" width="1.6" height="9.5" rx="0.5" fill="#1d3b5e"/><rect x="11" y="8" width="1.6" height="9.5" rx="0.5" fill="#1d3b5e"/></svg></div>
<div class="dl" style="left:32px;top:0;height:726px"></div>
<div class="dl" style="left:111px;top:0;height:726px"></div>
<div class="dl" style="left:194px;top:0;height:726px"></div>
<div class="dl" style="left:284px;top:0;height:726px"></div>
<div class="dl" style="left:394px;top:0;height:726px"></div>
<div class="dl" style="left:504px;top:0;height:726px"></div>
<div class="dl" style="left:614px;top:0;height:726px"></div>
<div class="dl" style="left:724px;top:0;height:726px"></div>
<div class="dl" style="left:889px;top:0;height:726px"></div>
<div class="dl" style="left:1014px;top:0;height:726px"></div>
<div class="dl" style="left:1114px;top:0;height:726px"></div>
<div class="dl" style="left:1194px;top:0;height:726px"></div>
<div class="dl" style="left:1304px;top:0;height:726px"></div>
<div class="dl" style="left:1336px;top:0;height:726px"></div>
<div class="dl" style="left:1368px;top:0;height:726px"></div>
<div class="abs" style="left:32px;top:0;width:1px;height:726px;background:#dcdcdc"></div>
<div class="abs" style="left:1374px;top:0;width:7px;height:726px;background:#f8f8f8"></div>
<div class="abs" style="left:1374px;top:0;width:7px;height:228px;background:#c1c1c1"></div>
</div>
<div id="foot-count">1 to 100 of 1,743</div>
<div class="pbtn" style="left:563px;width:47px">First</div>
<div class="pbtn" style="left:621px;width:71px">Previous</div>
<div class="pbtn" style="left:777px;width:49px">Next</div>
<div class="pbtn" style="left:837px;width:47px">Last</div>
<div id="pagetxt" style="left:699px">Page 1 of 18</div>
</div>
<div id="rpanel"><div id="rtitle">Corridor Input</div><div id="rsep"></div>
<div class="lbl" style="left:14px;top:63px">Origin Pool</div>
<div class="lbl" style="left:236px;top:63px">Destination Pool</div>
<div class="inp" style="left:14px;top:77px;width:192px;height:34px"><div class="abs" style="right:0;top:0;width:36px;height:32px;background:#eee;border-left:1px solid #d5d5d5"><svg width="10" height="7" viewBox="0 0 10 7" style="position:absolute;left:13px;top:13px"><path d="M1 1l4 4 4-4" stroke="#777" stroke-width="2" fill="none"/></svg></div></div>
<div class="inp" style="left:236px;top:77px;width:192px;height:34px"><div class="abs" style="right:0;top:0;width:36px;height:32px;background:#eee;border-left:1px solid #d5d5d5"><svg width="10" height="7" viewBox="0 0 10 7" style="position:absolute;left:13px;top:13px"><path d="M1 1l4 4 4-4" stroke="#777" stroke-width="2" fill="none"/></svg></div></div>
<div class="lbl" style="left:14px;top:130px">Frequency</div>
<div class="lbl" style="left:236px;top:130px">Transit Time</div>
<div class="inp" style="left:14px;top:144px;width:192px;height:32px"><div class="abs" style="left:5px;top:4px;width:70px;height:22px;background:#034e6e;color:#fff;font-size:13px;font-weight:bold;line-height:24px;padding-left:9px">Daily<svg width="16" height="16" viewBox="0 0 16 16" style="position:absolute;left:44px;top:3px"><circle cx="8" cy="8" r="7.5" fill="#fff"/><path d="M5.3 5.3l5.4 5.4M10.7 5.3l-5.4 5.4" stroke="#034e6e" stroke-width="2"/></svg></div></div>
<div class="inp" style="left:236px;top:144px;width:50px;height:32px"></div>
<div class="inp" style="left:319px;top:144px;width:50px;height:32px"></div>
<div class="lbl" style="left:285px;top:154px;font-size:11px;color:#666;letter-spacing:0.1px">day(s)</div>
<div class="lbl" style="left:369px;top:154px;font-size:10.5px;color:#666;letter-spacing:0.1px">hour(s)</div>
<div class="lbl" style="left:14px;top:195px">Transit Cost (USD)</div>
<div class="lbl" style="left:14px;top:211px">20 Foot</div>
<div class="lbl" style="left:152px;top:211px">40 Foot</div>
<div class="lbl" style="left:290px;top:211px">45 Foot</div>
<div class="inp" style="left:14px;top:224px;width:134px;height:34px"><div class="addon" style="line-height:32px">$</div><div class="ph" style="left:30px;top:8px">Unlimited</div></div>
<div class="inp" style="left:152px;top:224px;width:133px;height:34px"><div class="addon" style="line-height:32px">$</div><div class="ph" style="left:30px;top:8px">Unlimited</div></div>
<div class="inp" style="left:289px;top:224px;width:134px;height:34px"><div class="addon" style="line-height:32px">$</div><div class="ph" style="left:30px;top:8px">Unlimited</div></div>
<div class="lbl" style="left:14px;top:292px">TEU Capacity</div>
<div class="lbl" style="left:162px;top:292px">Slack/Max Capacity</div>
<div class="inp" style="left:14px;top:306px;width:118px;height:32px"><div class="ph" style="left:10px;top:7px;color:#555">Unlimited</div></div>
<div class="inp" style="left:162px;top:306px;width:130px;height:34px"><div class="ph" style="left:1px;top:8px">Unlimited</div></div>
<div class="inp" style="left:295px;top:306px;width:100px;height:32px"><div class="ph" style="left:9px;top:7px;color:#333;letter-spacing:-0.35px">Absolute</div><svg width="8" height="13" viewBox="0 0 8 13" style="position:absolute;left:80px;top:9px"><path d="M4 0l4 5H0zM4 13l4-5H0z" fill="#333"/></svg></div>
<div class="lbl" style="left:14px;top:374px">Optimization Deadlines (In days)</div>
<div class="inp" style="left:14px;top:388px;width:192px;height:32px"><div class="ph" style="left:10px;top:7px;color:#333">7</div></div>
<div class="inp" style="left:236px;top:393px;width:19px;height:19px"></div>
<div class="lbl" style="left:261px;top:396px">Block-Train Booking</div>
<div class="lbl" style="left:14px;top:439px">Comment</div>
<div class="inp" style="left:14px;top:453px;width:416px;height:56px;border-color:#a9a9a9"><svg width="9" height="9" viewBox="0 0 9 9" style="position:absolute;right:1px;bottom:1px"><path d="M8.5 1L1 8.5M8.5 5L5 8.5" stroke="#666" stroke-width="1.1"/></svg></div>
<div id="rfoot"></div>
<div class="btn" style="left:19px;top:551px;width:96px;height:31px"><svg width="13" height="13" viewBox="0 0 13 13" style="position:absolute;left:23px;top:9px"><path d="M5 0h3v5h5v3H8v5H5V8H0V5h5z" fill="#fff"/></svg><span style="position:absolute;left:40px;top:9px;font-size:13px">NEW</span></div>
<div class="btn" style="left:330px;top:551px;width:99px;height:31px"><svg width="13" height="14" viewBox="0 0 13 14" style="position:absolute;left:24px;top:9px"><path d="M1 1h9l2 2v10H1z" fill="none" stroke="#fff" stroke-width="1.6"/><rect x="3.5" y="1" width="5" height="3" fill="#fff"/><circle cx="6.5" cy="9" r="1.7" fill="none" stroke="#fff" stroke-width="1.3"/></svg><span style="position:absolute;left:40px;top:9px;font-size:13px">SAVE</span></div>
</div>
<div id="bottombar"><div id="help" style="left:27px;top:8px"><svg width="14" height="14" viewBox="0 0 20 20" style="position:absolute;left:14px;top:6px"><circle cx="10" cy="10" r="9.6" fill="#fff"/><path d="M6.8 7.5 Q7 4.5 10 4.5 Q13.2 4.5 13.2 7.3 Q13.2 9 11.2 10 Q10.8 10.4 10.8 12" fill="none" stroke="#034e6e" stroke-width="2.6"/><rect x="9.5" y="13.4" width="2.6" height="2.6" fill="#034e6e"/></svg><span style="position:absolute;left:31px;top:6px">HELP</span></div></div>
<svg class="abs" style="left:384px;top:104px;overflow:visible" width="14" height="21" viewBox="0 0 14 21"><path d="M1.2 1 V17.8 L5.1 14.1 L8.2 19.4 L10.9 19 L8.6 13.6 L13.2 12.8 Z" fill="#fff" stroke="#000" stroke-width="1" stroke-linejoin="miter"/></svg>
<div class="abs" style="left:0;top:902px;width:1920px;height:1px;background:#06141a"></div>
</body></html>
